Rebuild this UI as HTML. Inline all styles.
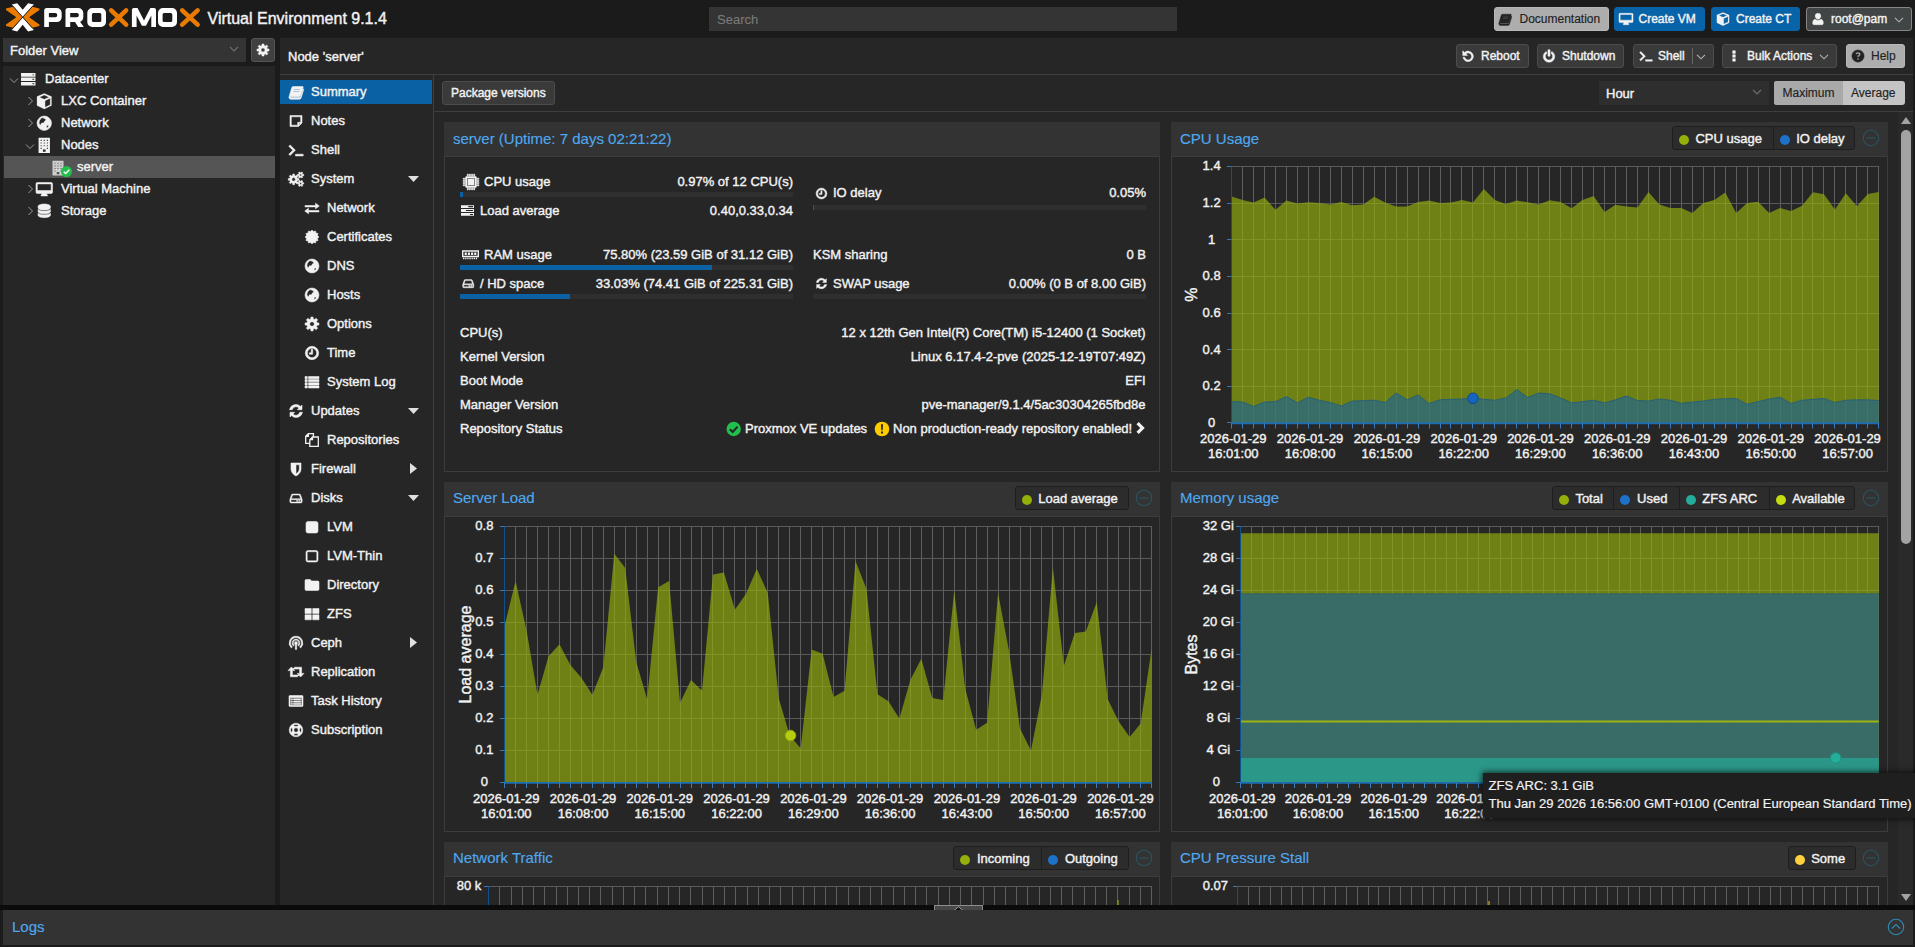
<!DOCTYPE html>
<html><head><meta charset="utf-8"><title>server - Proxmox Virtual Environment</title>
<style>
html,body{margin:0;padding:0}
body{width:1915px;height:947px;overflow:hidden;position:relative;background:#1b1b1b;color:#f2f2f2;font-family:"Liberation Sans",sans-serif;font-size:13px}
div{position:absolute;box-sizing:border-box;-webkit-text-stroke:0.4px}
svg.ch text{stroke:#f2f2f2;stroke-width:0.4px}
svg{display:block}
.btn{background:#3a3a3a;border:1px solid #4c4c4c;border-radius:3px}
.leg{background:#2c2c2c;border:1px solid #1e1e1e;border-radius:3px}
</style></head><body>

<div style="left:0;top:0;width:1915px;height:38px;background:#1b1b1b">
<svg style="position:absolute;left:0;top:0" width="205" height="38" viewBox="0 0 205 38">
<path d="M11.800 4.600L17.200 3.200 22.700 9.800 28.100 3.200 33.900 4.600 22.700 17.200ZM11.800 30.100L17.200 31.500 22.700 24.700 28.100 31.500 33.900 30.100 22.700 17.200Z" fill="#ffffff"/>
<path d="M13.200 6.700L6 8.500 6 10.100 16.300 17.200 6 24.400 6 26 13.200 27.800 22.700 17.200ZM32.200 6.700L39.400 8.500 39.400 10.100 29.100 17.200 39.400 24.400 39.400 26 32.200 27.800 22.700 17.200Z" fill="#ea7a00"/>
<path d="M12.500 5.800L32.900 28.600M32.900 5.800L12.500 28.600" stroke="#1b1b1b" stroke-width="0.900" fill="none"/>
<g fill="#fff" fill-rule="evenodd">
<path d="M44.200 27V10.500a2.500 2.500 0 0 1 2.500-2.500H56.700a5 5 0 0 1 5 5V17.100a5 5 0 0 1-5 5H48.900V27ZM48.900 12.900H55.400a1.800 1.800 0 0 1 1.800 1.800v.7a1.800 1.800 0 0 1-1.800 1.800H48.900Z"/>
<path d="M65.500 27V10.500a2.500 2.500 0 0 1 2.500-2.500H78.300a5 5 0 0 1 5 5V17.100a5 5 0 0 1-3.200 4.660L83.800 27H78.200L75 22.100H70.200V27ZM70.200 12.900H77a1.800 1.800 0 0 1 1.800 1.800v.7a1.800 1.800 0 0 1-1.800 1.800H70.200Z"/>
<path d="M92.30 8H101.00a5 5 0 0 1 5 5V22a5 5 0 0 1-5 5H92.30a5 5 0 0 1-5-5V13a5 5 0 0 1 5-5ZM93.40 12.900H99.80a1.500 1.500 0 0 1 1.500 1.500v6.200a1.500 1.500 0 0 1-1.500 1.500H93.40a1.500 1.500 0 0 1-1.500-1.500v-6.200a1.500 1.500 0 0 1 1.500-1.500Z"/>
<path d="M131.900 27V10a2 2 0 0 1 2-2H137.500L144 20.500 150.400 8H154a2 2 0 0 1 2 2V27H151.300V15.500L146 25.800H141.900L136.600 15.500V27Z"/>
<path d="M163.00 8H172.00a5 5 0 0 1 5 5V22a5 5 0 0 1-5 5H163.00a5 5 0 0 1-5-5V13a5 5 0 0 1 5-5ZM164.10 12.900H170.80a1.500 1.500 0 0 1 1.500 1.500v6.200a1.500 1.500 0 0 1-1.500 1.500H164.10a1.500 1.500 0 0 1-1.500-1.500v-6.200a1.500 1.500 0 0 1 1.500-1.500Z"/>
</g>
<g fill="none" stroke="#ea7a00" stroke-width="4.600" stroke-linecap="round">
<path d="M111.20 10.400L126.10 24.600M126.10 10.400L111.20 24.600"/><path d="M182.20 10.400L197.60 24.600M197.60 10.400L182.20 24.600"/>
</g></svg>
<div style="top:8.8px;line-height:20px;font-size:16px;white-space:pre;left:207.5px;">Virtual Environment 9.1.4</div>
<div style="left:709px;top:7px;width:468px;height:24px;background:#343434"></div>
<div style="top:10.5px;line-height:17px;font-size:13px;white-space:pre;color:#7a7a7a;left:717px;-webkit-text-stroke:0.1px;">Search</div>
<div class="btn" style="left:1494px;top:7px;width:115px;height:24px;background:#adadad;border-color:#b8b8b8;"></div>
<div style="left:1498.0px;top:12.0px;width:14px;height:14px;color:#222;line-height:0"><svg viewBox="0 0 16 16" width="14" height="14" fill="currentColor" stroke="currentColor" stroke-width="0.55" stroke-linejoin="round" style="overflow:visible;"><path d="M5.2 2.5h9.3c.5 0 .8.4.6.9l-2.6 8.3c-.2.6-.7 1-1.3 1H2.6c-.3 0-.4.3-.2.5.2.3.5.3.8.3h8.3c.5 0 1-.3 1.1-.8l2.5-8c.5.3.6.8.5 1.2l-2.5 8c-.3.9-1 1.4-1.9 1.4H3c-.9 0-1.7-.6-2-1.400-.2-.5-.1-.9.1-1.300L3.600 4c.3-.9.8-1.500 1.600-1.500zM6 5.300l-.2.700h6l.2-.700zM5.500 7l-.2.700h6l.2-.700z" fill-rule="evenodd"/></svg></div>
<div style="top:10.5px;line-height:16px;font-size:12px;white-space:pre;color:#222;left:1519.5px;-webkit-text-stroke:0.15px;">Documentation</div>
<div class="btn" style="left:1614px;top:7px;width:91px;height:24px;background:#0963a8;border-color:#0963a8;"></div>
<div style="left:1618.5px;top:12.0px;width:14px;height:14px;color:#f2f2f2;line-height:0"><svg viewBox="0 0 16 16" width="14" height="14" fill="currentColor" stroke="currentColor" stroke-width="0.55" stroke-linejoin="round" style="overflow:visible;"><path d="M1.200 1.500h13.600c.6 0 1.200.5 1.200 1.200v8.200c0 .6-.5 1.200-1.200 1.200h-4.400c0 .6.300 1.200.7 1.700v.7H4.900v-.7c.4-.5.700-1.100.7-1.700H1.200C.5 12.100 0 11.500 0 10.900V2.700c0-.6.500-1.200 1.200-1.200zM1.300 2.800v6.500h13.400V2.800z" fill-rule="evenodd"/></svg></div>
<div style="top:10.5px;line-height:16px;font-size:12px;white-space:pre;color:#f2f2f2;left:1638.5px;">Create VM</div>
<div class="btn" style="left:1711px;top:7px;width:89px;height:24px;background:#0963a8;border-color:#0963a8;"></div>
<div style="left:1715.5px;top:12.0px;width:14px;height:14px;color:#f2f2f2;line-height:0"><svg viewBox="0 0 16 16" width="14" height="14" fill="currentColor" stroke="currentColor" stroke-width="0.25" stroke-linejoin="round" style="overflow:visible;"><path d="M8 0.500l7 3v8.700L8 15.600 1 12.200V3.500zM8 2L3.400 4 8 6.100l4.600-2.100zM8.800 7.500v6.300l5-2.400V5.200z" fill-rule="evenodd"/></svg></div>
<div style="top:10.5px;line-height:16px;font-size:12px;white-space:pre;color:#f2f2f2;left:1736px;">Create CT</div>
<div class="btn" style="left:1806px;top:7px;width:106px;height:24px;background:#414545;border-color:#868686;"></div>
<div style="left:1811.0px;top:12.0px;width:14px;height:14px;color:#f2f2f2;line-height:0"><svg viewBox="0 0 16 16" width="14" height="14" fill="currentColor" stroke="currentColor" stroke-width="0.55" stroke-linejoin="round" style="overflow:visible;"><path d="M8 1.500a3.200 3.200 0 0 1 3.200 3.200c0 1.800-1.400 3.600-3.200 3.600S4.800 6.500 4.800 4.700A3.200 3.200 0 0 1 8 1.500zM4.800 8.300c.9.800 2 1.300 3.200 1.300s2.300-.5 3.200-1.300c1.700.3 2.800 1.700 2.800 3.700v1c0 .8-.7 1.500-1.500 1.500h-9C2.700 14.500 2 13.800 2 13v-1c0-2 1.100-3.400 2.800-3.700z"/></svg></div>
<div style="top:10.5px;line-height:16px;font-size:12px;white-space:pre;color:#f2f2f2;left:1831px;">root@pam</div>
<svg style="position:absolute;left:1894px;top:16.5px" width="10" height="6" viewBox="0 0 10 6"><path d="M1 0.800L5 4.800 9 0.800" fill="none" stroke="#b5b5b5" stroke-width="1.100"/></svg>
</div>
<div style="left:3px;top:38px;width:243px;height:24px;background:#343434"></div>
<div style="top:41.8px;line-height:17px;font-size:13px;white-space:pre;left:10px;">Folder View</div>
<svg style="position:absolute;left:229px;top:46px" width="10" height="7" viewBox="0 0 10 7"><path d="M1 1L5 5 9 1" fill="none" stroke="#6e6e6e" stroke-width="1.100"/></svg>
<div class="btn" style="left:251px;top:38px;width:24px;height:24px;background:#404040;border-color:#555"></div>
<div style="left:256.0px;top:43.0px;width:14px;height:14px;color:#f2f2f2;line-height:0"><svg viewBox="0 0 16 16" width="14" height="14" fill="currentColor" stroke="currentColor" stroke-width="0.55" stroke-linejoin="round" style="overflow:visible;"><path d="M14.91 6.90 L14.91 9.10 L13.04 9.26 L12.46 10.67 L13.66 12.11 L12.11 13.66 L10.67 12.46 L9.26 13.04 L9.10 14.91 L6.90 14.91 L6.74 13.04 L5.33 12.46 L3.89 13.66 L2.34 12.11 L3.54 10.67 L2.96 9.26 L1.09 9.10 L1.09 6.90 L2.96 6.74 L3.54 5.33 L2.34 3.89 L3.89 2.34 L5.33 3.54 L6.74 2.96 L6.90 1.09 L9.10 1.09 L9.26 2.96 L10.67 3.54 L12.11 2.34 L13.66 3.89 L12.46 5.33 L13.04 6.74Z M5.70 8.00 a2.30 2.30 0 1 0 4.60 0 a2.30 2.30 0 1 0 -4.60 0Z" fill-rule="evenodd"/></svg></div>
<div style="left:3px;top:66px;width:272px;height:839px;background:#262626"></div>
<svg style="position:absolute;left:9px;top:76.5px" width="10" height="7" viewBox="0 0 10 7"><path d="M1 1.500L5 5.500 9 1.500" fill="none" stroke="#9a9a9a" stroke-width="1"/></svg>
<div style="left:19.75px;top:71.35px;width:16.5px;height:16.5px;color:#f2f2f2;line-height:0"><svg viewBox="0 0 16 16" width="16.5" height="16.5" fill="currentColor" stroke="currentColor" stroke-width="0" stroke-linejoin="round" style="overflow:visible;"><path d="M1 2h14v3.500H1zM1 6.300h14v3.500H1zM1 10.600h14v3.500H1z"/><path d="M12 3.300h1.800v.9H12zM12 7.600h1.800v.9H12zM12 11.900h1.800v.9H12z" fill="#262626"/></svg></div>
<div style="top:70.0px;line-height:17px;font-size:13px;white-space:pre;left:45px;">Datacenter</div>
<svg style="position:absolute;left:26.5px;top:96px" width="7" height="10" viewBox="0 0 7 10"><path d="M1.500 1L5.500 5 1.500 9" fill="none" stroke="#9a9a9a" stroke-width="1"/></svg>
<div style="left:35.75px;top:93.35px;width:16.5px;height:16.5px;color:#f2f2f2;line-height:0"><svg viewBox="0 0 16 16" width="16.5" height="16.5" fill="currentColor" stroke="currentColor" stroke-width="0.25" stroke-linejoin="round" style="overflow:visible;"><path d="M8 0.500l7 3v8.700L8 15.600 1 12.200V3.500zM8 2L3.400 4 8 6.100l4.600-2.100zM8.800 7.500v6.300l5-2.400V5.200z" fill-rule="evenodd"/></svg></div>
<div style="top:92.0px;line-height:17px;font-size:13px;white-space:pre;left:61px;">LXC Container</div>
<svg style="position:absolute;left:26.5px;top:118px" width="7" height="10" viewBox="0 0 7 10"><path d="M1.500 1L5.500 5 1.500 9" fill="none" stroke="#9a9a9a" stroke-width="1"/></svg>
<div style="left:35.75px;top:115.35px;width:16.5px;height:16.5px;color:#f2f2f2;line-height:0"><svg viewBox="0 0 16 16" width="16.5" height="16.5" fill="currentColor" stroke="currentColor" stroke-width="0.55" stroke-linejoin="round" style="overflow:visible;"><path d="M8 1a7 7 0 1 0 0 14A7 7 0 0 0 8 1zM5.400 3c.7-.5 1.600-.4 2.200.1.600.6 1.700.4 2 1.300.2.800-.7 1.200-1.200 1.600-.6.500-.3 1.400-1.100 1.700-.7.300-1.500-.1-2.100.4-.5.400.1 1.200-.5 1.500-.6.300-1.200-.4-1.500-1C2.500 6.800 3.500 4.200 5.400 3zM11 10c.5-.2 1 0 1.100.5.100.6-.3 1.200-.8 1.500-.4.300-.9.400-1.100 0-.2-.4.100-.8.100-1.200 0-.4.300-.7.700-.8z" fill-rule="evenodd"/></svg></div>
<div style="top:114.0px;line-height:17px;font-size:13px;white-space:pre;left:61px;">Network</div>
<svg style="position:absolute;left:25px;top:142.5px" width="10" height="7" viewBox="0 0 10 7"><path d="M1 1.500L5 5.500 9 1.500" fill="none" stroke="#9a9a9a" stroke-width="1"/></svg>
<div style="left:35.75px;top:137.35px;width:16.5px;height:16.5px;color:#f2f2f2;line-height:0"><svg viewBox="0 0 16 16" width="16.5" height="16.5" fill="currentColor" stroke="currentColor" stroke-width="0" stroke-linejoin="round" style="overflow:visible;"><path d="M2.500 0.800h11v14.700h-11zM4.5 2.7h1v1.100h-1zM7.5 2.7h1v1.100h-1zM10.5 2.7h1v1.100h-1zM4.5 5.3h1v1.100h-1zM7.5 5.3h1v1.100h-1zM10.5 5.3h1v1.100h-1zM4.5 7.9h1v1.100h-1zM7.5 7.9h1v1.100h-1zM10.5 7.9h1v1.100h-1zM4.5 10.5h1v1.100h-1zM10.5 10.5h1v1.100h-1zM6.700 12v2.200h2.600V12z" fill-rule="evenodd"/></svg></div>
<div style="top:136.0px;line-height:17px;font-size:13px;white-space:pre;left:61px;">Nodes</div>
<div style="left:4px;top:156px;width:271px;height:22px;background:#555555"></div>
<div style="left:50.0px;top:159.5px;width:16px;height:16px;color:#cfcfcf;line-height:0"><svg viewBox="0 0 16 16" width="16" height="16" fill="currentColor" stroke="currentColor" stroke-width="0" stroke-linejoin="round" style="overflow:visible;"><path d="M2.500 0.800h11v14.700h-11zM4.5 2.7h1v1.100h-1zM7.5 2.7h1v1.100h-1zM10.5 2.7h1v1.100h-1zM4.5 5.3h1v1.100h-1zM7.5 5.3h1v1.100h-1zM10.5 5.3h1v1.100h-1zM4.5 7.9h1v1.100h-1zM7.5 7.9h1v1.100h-1zM10.5 7.9h1v1.100h-1zM4.5 10.5h1v1.100h-1zM10.5 10.5h1v1.100h-1zM6.700 12v2.200h2.600V12z" fill-rule="evenodd"/></svg></div>
<svg style="position:absolute;left:60.5px;top:165.5px" width="11" height="11" viewBox="0 0 11 11"><circle cx="5.500" cy="5.500" r="5.500" fill="#21bf4b"/><path d="M2.700 5.700L4.700 7.600 8.300 3.800" fill="none" stroke="#fff" stroke-width="1.400"/></svg>
<div style="top:158.0px;line-height:17px;font-size:13px;white-space:pre;left:77px;">server</div>
<svg style="position:absolute;left:26.5px;top:184px" width="7" height="10" viewBox="0 0 7 10"><path d="M1.500 1L5.500 5 1.500 9" fill="none" stroke="#9a9a9a" stroke-width="1"/></svg>
<div style="left:35.75px;top:181.35px;width:16.5px;height:16.5px;color:#f2f2f2;line-height:0"><svg viewBox="0 0 16 16" width="16.5" height="16.5" fill="currentColor" stroke="currentColor" stroke-width="0.55" stroke-linejoin="round" style="overflow:visible;"><path d="M1.200 1.500h13.600c.6 0 1.200.5 1.200 1.200v8.200c0 .6-.5 1.200-1.200 1.200h-4.400c0 .6.300 1.200.7 1.700v.7H4.900v-.7c.4-.5.700-1.100.7-1.700H1.200C.5 12.100 0 11.500 0 10.900V2.700c0-.6.500-1.200 1.200-1.200zM1.300 2.800v6.500h13.400V2.800z" fill-rule="evenodd"/></svg></div>
<div style="top:180.0px;line-height:17px;font-size:13px;white-space:pre;left:61px;">Virtual Machine</div>
<svg style="position:absolute;left:26.5px;top:206px" width="7" height="10" viewBox="0 0 7 10"><path d="M1.500 1L5.500 5 1.500 9" fill="none" stroke="#9a9a9a" stroke-width="1"/></svg>
<div style="left:35.75px;top:203.35px;width:16.5px;height:16.5px;color:#f2f2f2;line-height:0"><svg viewBox="0 0 16 16" width="16.5" height="16.5" fill="currentColor" stroke="currentColor" stroke-width="0.55" stroke-linejoin="round" style="overflow:visible;"><path d="M8 1c3.300 0 6 1 6 2.300v1.200c0 1.300-2.700 2.300-6 2.300S2 5.800 2 4.500V3.300C2 2 4.700 1 8 1zM2 6.200c1 1 3.500 1.600 6 1.600s5-.6 6-1.600v2c0 1.300-2.700 2.300-6 2.300S2 9.500 2 8.200zM2 9.900c1 1 3.500 1.600 6 1.600s5-.6 6-1.600v2c0 1.300-2.700 2.300-6 2.300s-6-1-6-2.300z"/></svg></div>
<div style="top:202.0px;line-height:17px;font-size:13px;white-space:pre;left:61px;">Storage</div>
<div style="left:280px;top:38px;width:1633px;height:867px;background:#262626"></div>
<div style="top:47.8px;line-height:17px;font-size:13px;white-space:pre;left:288px;">Node 'server'</div>
<div style="left:280px;top:74px;width:1633px;height:1px;background:#3e3e3e"></div>
<div class="btn" style="left:1456px;top:44px;width:73px;height:24px;"></div>
<div style="left:1461.0px;top:49.0px;width:14px;height:14px;color:#f2f2f2;line-height:0"><svg viewBox="0 0 16 16" width="14" height="14" fill="currentColor" stroke="currentColor" stroke-width="0.55" stroke-linejoin="round" style="overflow:visible;"><path d="M2 2l2 2a6 6 0 1 1-1.800 5.500h2A4 4 0 1 0 5.500 5.500l2 2H2z"/></svg></div>
<div style="top:47.5px;line-height:16px;font-size:12px;white-space:pre;color:#f2f2f2;left:1481px;">Reboot</div>
<div class="btn" style="left:1537px;top:44px;width:87px;height:24px;"></div>
<div style="left:1542.0px;top:49.0px;width:14px;height:14px;color:#f2f2f2;line-height:0"><svg viewBox="0 0 16 16" width="14" height="14" fill="currentColor" stroke="currentColor" stroke-width="0.55" stroke-linejoin="round" style="overflow:visible;"><path d="M6.800 0.800h2.400v7.400H6.800zM4.800 2.800l1 2a4.200 4.200 0 1 0 4.400 0l1-2a6.600 6.600 0 1 1-6.400 0z"/></svg></div>
<div style="top:47.5px;line-height:16px;font-size:12px;white-space:pre;color:#f2f2f2;left:1562px;">Shutdown</div>
<div class="btn" style="left:1633px;top:44px;width:81px;height:24px;"></div>
<div style="left:1639.0px;top:49.0px;width:14px;height:14px;color:#f2f2f2;line-height:0"><svg viewBox="0 0 16 16" width="14" height="14" fill="currentColor" stroke="currentColor" stroke-width="0.55" stroke-linejoin="round" style="overflow:visible;"><path d="M0.800 4.200l1.300-1.300L7.400 8.200 2.100 13.500.800 12.200 4.800 8.200zM7.500 12.200h7.700v1.700H7.500z"/></svg></div>
<div style="top:47.5px;line-height:16px;font-size:12px;white-space:pre;color:#f2f2f2;left:1658px;">Shell</div>
<svg style="position:absolute;left:1696px;top:53.5px" width="10" height="6" viewBox="0 0 10 6"><path d="M1 0.800L5 4.800 9 0.800" fill="none" stroke="#b5b5b5" stroke-width="1.100"/></svg>
<div style="left:1692px;top:48px;width:1px;height:16px;background:#666"></div>
<div class="btn" style="left:1722px;top:44px;width:115px;height:24px;"></div>
<div style="left:1727.0px;top:49.0px;width:14px;height:14px;color:#f2f2f2;line-height:0"><svg viewBox="0 0 16 16" width="14" height="14" fill="currentColor" stroke="currentColor" stroke-width="0.55" stroke-linejoin="round" style="overflow:visible;"><path d="M6.500 2h3v3h-3zM6.500 6.500h3v3h-3zM6.500 11h3v3h-3z"/></svg></div>
<div style="top:47.5px;line-height:16px;font-size:12px;white-space:pre;color:#f2f2f2;left:1747px;">Bulk Actions</div>
<svg style="position:absolute;left:1819px;top:53.5px" width="10" height="6" viewBox="0 0 10 6"><path d="M1 0.800L5 4.800 9 0.800" fill="none" stroke="#b5b5b5" stroke-width="1.100"/></svg>
<div class="btn" style="left:1846px;top:44px;width:59px;height:24px;background:#adadad;border-color:#b8b8b8;"></div>
<div style="left:1851.0px;top:49.0px;width:14px;height:14px;color:#222;line-height:0"><svg viewBox="0 0 16 16" width="14" height="14" fill="currentColor" stroke="currentColor" stroke-width="0.55" stroke-linejoin="round" style="overflow:visible;"><path d="M8 1a7 7 0 1 0 0 14A7 7 0 0 0 8 1zM8 3.500c1.700 0 3 1 3 2.500 0 1.200-.7 1.800-1.400 2.200-.5.300-.6.500-.6 1v.3H7v-.5c0-1 .4-1.500 1.100-1.900.5-.3.800-.5.800-1 0-.5-.4-.8-1-.8s-1.100.3-1.500.9L5 5.200c.6-1 1.700-1.700 3-1.700zM7 10.500h2v2H7z" fill-rule="evenodd"/></svg></div>
<div style="top:47.5px;line-height:16px;font-size:12px;white-space:pre;color:#222;left:1871px;-webkit-text-stroke:0.15px;">Help</div>
<div style="left:433px;top:75px;width:1px;height:830px;background:#3e3e3e"></div>
<div style="left:280px;top:80px;width:152px;height:24px;background:#0a62a5"></div>
<div style="left:288.0px;top:83.5px;width:16px;height:16px;color:#f2f2f2;line-height:0"><svg viewBox="0 0 16 16" width="16" height="16" fill="currentColor" stroke="currentColor" stroke-width="0.55" stroke-linejoin="round" style="overflow:visible;"><path d="M5.2 2.5h9.3c.5 0 .8.4.6.9l-2.6 8.3c-.2.6-.7 1-1.3 1H2.6c-.3 0-.4.3-.2.5.2.3.5.3.8.3h8.3c.5 0 1-.3 1.1-.8l2.5-8c.5.3.6.8.5 1.2l-2.5 8c-.3.9-1 1.4-1.9 1.4H3c-.9 0-1.7-.6-2-1.400-.2-.5-.1-.9.1-1.300L3.600 4c.3-.9.8-1.500 1.600-1.500zM6 5.300l-.2.700h6l.2-.700zM5.500 7l-.2.700h6l.2-.700z" fill-rule="evenodd"/></svg></div>
<div style="top:82.5px;line-height:17px;font-size:13px;white-space:pre;left:311px;">Summary</div>
<div style="left:288.0px;top:112.5px;width:16px;height:16px;color:#f2f2f2;line-height:0"><svg viewBox="0 0 16 16" width="16" height="16" fill="currentColor" stroke="currentColor" stroke-width="0.55" stroke-linejoin="round" style="overflow:visible;"><path d="M2 2.500h12v7.500l-3.500 3.500H2zM3.300 3.800v8.400h6.400V9.300h3V3.800zM11 10.600v1.300l1.300-1.300z" fill-rule="evenodd"/></svg></div>
<div style="top:111.5px;line-height:17px;font-size:13px;white-space:pre;left:311px;">Notes</div>
<div style="left:288.0px;top:141.5px;width:16px;height:16px;color:#f2f2f2;line-height:0"><svg viewBox="0 0 16 16" width="16" height="16" fill="currentColor" stroke="currentColor" stroke-width="0.55" stroke-linejoin="round" style="overflow:visible;"><path d="M0.800 4.200l1.300-1.300L7.400 8.200 2.100 13.500.800 12.200 4.800 8.200zM7.500 12.200h7.700v1.700H7.500z"/></svg></div>
<div style="top:140.5px;line-height:17px;font-size:13px;white-space:pre;left:311px;">Shell</div>
<div style="left:288.0px;top:170.5px;width:16px;height:16px;color:#f2f2f2;line-height:0"><svg viewBox="0 0 16 16" width="16" height="16" fill="currentColor" stroke="currentColor" stroke-width="0.55" stroke-linejoin="round" style="overflow:visible;"><path d="M10.93 7.56 L10.93 9.24 L9.48 9.37 L9.03 10.46 L9.97 11.57 L8.77 12.77 L7.66 11.83 L6.57 12.28 L6.44 13.73 L4.76 13.73 L4.63 12.28 L3.54 11.83 L2.43 12.77 L1.23 11.57 L2.17 10.46 L1.72 9.37 L0.27 9.24 L0.27 7.56 L1.72 7.43 L2.17 6.34 L1.23 5.23 L2.43 4.03 L3.54 4.97 L4.63 4.52 L4.76 3.07 L6.44 3.07 L6.57 4.52 L7.66 4.97 L8.77 4.03 L9.97 5.23 L9.03 6.34 L9.48 7.43Z M3.80 8.40 a1.80 1.80 0 1 0 3.60 0 a1.80 1.80 0 1 0 -3.60 0Z M15.73 3.33 L15.73 4.67 L14.68 4.71 L14.25 5.45 L14.74 6.38 L13.59 7.04 L13.03 6.16 L12.17 6.16 L11.61 7.04 L10.46 6.38 L10.95 5.45 L10.52 4.71 L9.47 4.67 L9.47 3.33 L10.52 3.29 L10.95 2.55 L10.46 1.62 L11.61 0.96 L12.17 1.84 L13.03 1.84 L13.59 0.96 L14.74 1.62 L14.25 2.55 L14.68 3.29Z M11.60 4.00 a1.00 1.00 0 1 0 2.00 0 a1.00 1.00 0 1 0 -2.00 0Z M15.73 11.73 L15.73 13.07 L14.68 13.11 L14.25 13.85 L14.74 14.78 L13.59 15.44 L13.03 14.56 L12.17 14.56 L11.61 15.44 L10.46 14.78 L10.95 13.85 L10.52 13.11 L9.47 13.07 L9.47 11.73 L10.52 11.69 L10.95 10.95 L10.46 10.02 L11.61 9.36 L12.17 10.24 L13.03 10.24 L13.59 9.36 L14.74 10.02 L14.25 10.95 L14.68 11.69Z M11.60 12.40 a1.00 1.00 0 1 0 2.00 0 a1.00 1.00 0 1 0 -2.00 0Z" fill-rule="evenodd"/></svg></div>
<div style="top:169.5px;line-height:17px;font-size:13px;white-space:pre;left:311px;">System</div>
<svg style="position:absolute;left:408px;top:175.5px" width="11" height="6" viewBox="0 0 11 6"><path d="M0 0h11L5.500 6z" fill="#e0e0e0"/></svg>
<div style="left:304.0px;top:199.5px;width:16px;height:16px;color:#f2f2f2;line-height:0"><svg viewBox="0 0 16 16" width="16" height="16" fill="currentColor" stroke="currentColor" stroke-width="0.55" stroke-linejoin="round" style="overflow:visible;"><path d="M1 5.500h10.500V3.200L15.300 6l-3.800 2.800V6.900H1zM15 10.500H4.500V8.200L.7 11l3.800 2.800v-1.900H15z"/></svg></div>
<div style="top:198.5px;line-height:17px;font-size:13px;white-space:pre;left:327px;">Network</div>
<div style="left:304.0px;top:228.5px;width:16px;height:16px;color:#f2f2f2;line-height:0"><svg viewBox="0 0 16 16" width="16" height="16" fill="currentColor" stroke="currentColor" stroke-width="0.55" stroke-linejoin="round" style="overflow:visible;"><path d="M15.00 8.00 L13.41 9.45 L14.06 11.50 L11.96 11.96 L11.50 14.06 L9.45 13.41 L8.00 15.00 L6.55 13.41 L4.50 14.06 L4.04 11.96 L1.94 11.50 L2.59 9.45 L1.00 8.00 L2.59 6.55 L1.94 4.50 L4.04 4.04 L4.50 1.94 L6.55 2.59 L8.00 1.00 L9.45 2.59 L11.50 1.94 L11.96 4.04 L14.06 4.50 L13.41 6.55Z"/></svg></div>
<div style="top:227.5px;line-height:17px;font-size:13px;white-space:pre;left:327px;">Certificates</div>
<div style="left:304.0px;top:257.5px;width:16px;height:16px;color:#f2f2f2;line-height:0"><svg viewBox="0 0 16 16" width="16" height="16" fill="currentColor" stroke="currentColor" stroke-width="0.55" stroke-linejoin="round" style="overflow:visible;"><path d="M8 1a7 7 0 1 0 0 14A7 7 0 0 0 8 1zM5.400 3c.7-.5 1.600-.4 2.200.1.600.6 1.700.4 2 1.300.2.800-.7 1.200-1.200 1.600-.6.500-.3 1.400-1.100 1.700-.7.300-1.500-.1-2.100.4-.5.400.1 1.200-.5 1.500-.6.300-1.200-.4-1.500-1C2.500 6.800 3.500 4.200 5.400 3zM11 10c.5-.2 1 0 1.100.5.100.6-.3 1.200-.8 1.500-.4.300-.9.400-1.100 0-.2-.4.100-.8.100-1.200 0-.4.300-.7.700-.8z" fill-rule="evenodd"/></svg></div>
<div style="top:256.5px;line-height:17px;font-size:13px;white-space:pre;left:327px;">DNS</div>
<div style="left:304.0px;top:286.5px;width:16px;height:16px;color:#f2f2f2;line-height:0"><svg viewBox="0 0 16 16" width="16" height="16" fill="currentColor" stroke="currentColor" stroke-width="0.55" stroke-linejoin="round" style="overflow:visible;"><path d="M8 1a7 7 0 1 0 0 14A7 7 0 0 0 8 1zM5.400 3c.7-.5 1.600-.4 2.200.1.600.6 1.700.4 2 1.300.2.800-.7 1.200-1.200 1.600-.6.500-.3 1.400-1.100 1.700-.7.300-1.500-.1-2.100.4-.5.400.1 1.200-.5 1.500-.6.300-1.200-.4-1.500-1C2.500 6.800 3.500 4.200 5.400 3zM11 10c.5-.2 1 0 1.100.5.100.6-.3 1.200-.8 1.500-.4.300-.9.400-1.100 0-.2-.4.100-.8.100-1.200 0-.4.300-.7.700-.8z" fill-rule="evenodd"/></svg></div>
<div style="top:285.5px;line-height:17px;font-size:13px;white-space:pre;left:327px;">Hosts</div>
<div style="left:304.0px;top:315.5px;width:16px;height:16px;color:#f2f2f2;line-height:0"><svg viewBox="0 0 16 16" width="16" height="16" fill="currentColor" stroke="currentColor" stroke-width="0.55" stroke-linejoin="round" style="overflow:visible;"><path d="M14.91 6.90 L14.91 9.10 L13.04 9.26 L12.46 10.67 L13.66 12.11 L12.11 13.66 L10.67 12.46 L9.26 13.04 L9.10 14.91 L6.90 14.91 L6.74 13.04 L5.33 12.46 L3.89 13.66 L2.34 12.11 L3.54 10.67 L2.96 9.26 L1.09 9.10 L1.09 6.90 L2.96 6.74 L3.54 5.33 L2.34 3.89 L3.89 2.34 L5.33 3.54 L6.74 2.96 L6.90 1.09 L9.10 1.09 L9.26 2.96 L10.67 3.54 L12.11 2.34 L13.66 3.89 L12.46 5.33 L13.04 6.74Z M5.70 8.00 a2.30 2.30 0 1 0 4.60 0 a2.30 2.30 0 1 0 -4.60 0Z" fill-rule="evenodd"/></svg></div>
<div style="top:314.5px;line-height:17px;font-size:13px;white-space:pre;left:327px;">Options</div>
<div style="left:304.0px;top:344.5px;width:16px;height:16px;color:#f2f2f2;line-height:0"><svg viewBox="0 0 16 16" width="16" height="16" fill="currentColor" stroke="currentColor" stroke-width="0.55" stroke-linejoin="round" style="overflow:visible;"><path d="M8 1.300a6.700 6.700 0 1 0 0 13.400A6.700 6.700 0 0 0 8 1.300zm0 2a4.700 4.700 0 1 1 0 9.400 4.700 4.700 0 0 1 0-9.400zM7.200 4.500h1.500v3.300h-.1v1.400H5.300V7.800h1.900z" fill-rule="evenodd"/></svg></div>
<div style="top:343.5px;line-height:17px;font-size:13px;white-space:pre;left:327px;">Time</div>
<div style="left:304.0px;top:373.5px;width:16px;height:16px;color:#f2f2f2;line-height:0"><svg viewBox="0 0 16 16" width="16" height="16" fill="currentColor" stroke="currentColor" stroke-width="0.55" stroke-linejoin="round" style="overflow:visible;"><path d="M1 2.500h2.300v2.200H1zM4.500 2.500H15v2.200H4.500zM1 5.600h2.300v2.200H1zM4.500 5.600H15v2.200H4.500zM1 8.700h2.300v2.200H1zM4.500 8.700H15v2.200H4.500zM1 11.800h2.300V14H1zM4.500 11.800H15V14H4.500z"/></svg></div>
<div style="top:372.5px;line-height:17px;font-size:13px;white-space:pre;left:327px;">System Log</div>
<div style="left:288.0px;top:402.5px;width:16px;height:16px;color:#f2f2f2;line-height:0"><svg viewBox="0 0 16 16" width="16" height="16" fill="currentColor" stroke="currentColor" stroke-width="0.55" stroke-linejoin="round" style="overflow:visible;"><path d="M14 2v4.700H9.300l1.700-1.700A4 4 0 0 0 4.200 6.700H1.500A6.600 6.600 0 0 1 12.600 3.400zM2 14V9.300h4.700L5 11a4 4 0 0 0 6.800-1.700h2.700A6.600 6.600 0 0 1 3.400 12.600z"/></svg></div>
<div style="top:401.5px;line-height:17px;font-size:13px;white-space:pre;left:311px;">Updates</div>
<svg style="position:absolute;left:408px;top:407.5px" width="11" height="6" viewBox="0 0 11 6"><path d="M0 0h11L5.500 6z" fill="#e0e0e0"/></svg>
<div style="left:304.0px;top:431.5px;width:16px;height:16px;color:#f2f2f2;line-height:0"><svg viewBox="0 0 16 16" width="16" height="16" fill="currentColor" stroke="currentColor" stroke-width="0.55" stroke-linejoin="round" style="overflow:visible;"><g fill="none" stroke="currentColor" stroke-width="1.300" stroke-linejoin="miter"><path d="M9.400 5V1.700H4.300L1.700 4.300V11.300H5.800M4.300 1.700V4.300H1.700"/><path d="M8.500 5H14.300V14.300H5.800V7.700zM8.500 5V7.700H5.800"/></g></svg></div>
<div style="top:430.5px;line-height:17px;font-size:13px;white-space:pre;left:327px;">Repositories</div>
<div style="left:288.0px;top:460.5px;width:16px;height:16px;color:#f2f2f2;line-height:0"><svg viewBox="0 0 16 16" width="16" height="16" fill="currentColor" stroke="currentColor" stroke-width="0.55" stroke-linejoin="round" style="overflow:visible;"><path d="M3 2h10v6c0 3.500-2.700 5.800-5 7-2.300-1.200-5-3.500-5-7zM8 3.800v9.100c1.600-1 3.300-2.600 3.300-4.900V3.800z" fill-rule="evenodd"/></svg></div>
<div style="top:459.5px;line-height:17px;font-size:13px;white-space:pre;left:311px;">Firewall</div>
<svg style="position:absolute;left:410px;top:463.0px" width="7" height="11" viewBox="0 0 7 11"><path d="M0 0v11L7 5.500z" fill="#e0e0e0"/></svg>
<div style="left:288.0px;top:489.5px;width:16px;height:16px;color:#f2f2f2;line-height:0"><svg viewBox="0 0 16 16" width="16" height="16" fill="currentColor" stroke="currentColor" stroke-width="0.55" stroke-linejoin="round" style="overflow:visible;"><g transform="translate(8 8.500) scale(.88 .82) translate(-8 -8)"><path d="M4 2.500h8c.5 0 .9.300 1.100.800l1.800 5.400c.1.200.1.500.1.700V12c0 .8-.7 1.500-1.500 1.500h-11C1.700 13.500 1 12.800 1 12V9.400c0-.2 0-.5.100-.7l1.800-5.400c.2-.5.600-.8 1.100-.8zM4.200 3.800L2.700 8.200h10.600l-1.500-4.400zM2.300 9.500v2.700h11.400V9.500zM11.800 10.200a.8.800 0 1 1 0 1.600.8.800 0 0 1 0-1.600zM9.300 10.200a.8.800 0 1 1 0 1.600.8.800 0 0 1 0-1.600z" fill-rule="evenodd"/></g></svg></div>
<div style="top:488.5px;line-height:17px;font-size:13px;white-space:pre;left:311px;">Disks</div>
<svg style="position:absolute;left:408px;top:494.5px" width="11" height="6" viewBox="0 0 11 6"><path d="M0 0h11L5.500 6z" fill="#e0e0e0"/></svg>
<div style="left:304.0px;top:518.5px;width:16px;height:16px;color:#f2f2f2;line-height:0"><svg viewBox="0 0 16 16" width="16" height="16" fill="currentColor" stroke="currentColor" stroke-width="0.55" stroke-linejoin="round" style="overflow:visible;"><rect x="2" y="2.500" width="12" height="11.500" rx="2"/></svg></div>
<div style="top:517.5px;line-height:17px;font-size:13px;white-space:pre;left:327px;">LVM</div>
<div style="left:304.0px;top:547.5px;width:16px;height:16px;color:#f2f2f2;line-height:0"><svg viewBox="0 0 16 16" width="16" height="16" fill="currentColor" stroke="currentColor" stroke-width="0.55" stroke-linejoin="round" style="overflow:visible;"><path d="M4 2.500h8a2 2 0 0 1 2 2V12a2 2 0 0 1-2 2H4a2 2 0 0 1-2-2V4.500a2 2 0 0 1 2-2zm0 1.200a.8.800 0 0 0-.8.800V12c0 .4.400.800.800.800h8c.4 0 .8-.4.800-.8V4.500a.8.800 0 0 0-.8-.8z" fill-rule="evenodd"/></svg></div>
<div style="top:546.5px;line-height:17px;font-size:13px;white-space:pre;left:327px;">LVM-Thin</div>
<div style="left:304.0px;top:576.5px;width:16px;height:16px;color:#f2f2f2;line-height:0"><svg viewBox="0 0 16 16" width="16" height="16" fill="currentColor" stroke="currentColor" stroke-width="0.55" stroke-linejoin="round" style="overflow:visible;"><path d="M2.200 2.500h3.600c.7 0 1.200.5 1.200 1.200v.3h6.800c.7 0 1.200.5 1.200 1.200v7.100c0 .7-.5 1.200-1.200 1.200H2.200c-.7 0-1.200-.5-1.200-1.200V3.700c0-.7.500-1.200 1.200-1.200z"/></svg></div>
<div style="top:575.5px;line-height:17px;font-size:13px;white-space:pre;left:327px;">Directory</div>
<div style="left:304.0px;top:605.5px;width:16px;height:16px;color:#f2f2f2;line-height:0"><svg viewBox="0 0 16 16" width="16" height="16" fill="currentColor" stroke="currentColor" stroke-width="0.55" stroke-linejoin="round" style="overflow:visible;"><path d="M1 2.500h6.300v5H1zM8.700 2.500H15v5H8.700zM1 8.800h6.300v5H1zM8.700 8.800H15v5H8.700z"/></svg></div>
<div style="top:604.5px;line-height:17px;font-size:13px;white-space:pre;left:327px;">ZFS</div>
<div style="left:288.0px;top:634.5px;width:16px;height:16px;color:#f2f2f2;line-height:0"><svg viewBox="0 0 16 16" width="16" height="16" fill="currentColor" stroke="currentColor" stroke-width="0.55" stroke-linejoin="round" style="overflow:visible;"><path d="M8 1.200a6.800 6.800 0 0 0-4.600 11.800l1-.9A5.500 5.500 0 1 1 11.600 12.100l1 .9A6.800 6.800 0 0 0 8 1.200zM8 4a4 4 0 0 0-2.600 7l1-.9a2.700 2.700 0 1 1 3.200 0l1 .9A4 4 0 0 0 8 4zM8 6.600a1.500 1.500 0 0 0-.7 2.800v5h1.400v-5A1.500 1.500 0 0 0 8 6.600z" fill-rule="evenodd"/></svg></div>
<div style="top:633.5px;line-height:17px;font-size:13px;white-space:pre;left:311px;">Ceph</div>
<svg style="position:absolute;left:410px;top:637.0px" width="7" height="11" viewBox="0 0 7 11"><path d="M0 0v11L7 5.500z" fill="#e0e0e0"/></svg>
<div style="left:288.0px;top:663.5px;width:16px;height:16px;color:#f2f2f2;line-height:0"><svg viewBox="0 0 16 16" width="16" height="16" fill="currentColor" stroke="currentColor" stroke-width="0.55" stroke-linejoin="round" style="overflow:visible;"><path d="M3.400 3L6.800 6.600H4.400V11H10.800L9.400 12.800H2.400V6.600H0ZM12.600 13L9.200 9.400H11.600V5H5.200L6.600 3.200H13.600V9.400H16Z"/></svg></div>
<div style="top:662.5px;line-height:17px;font-size:13px;white-space:pre;left:311px;">Replication</div>
<div style="left:288.0px;top:692.5px;width:16px;height:16px;color:#f2f2f2;line-height:0"><svg viewBox="0 0 16 16" width="16" height="16" fill="currentColor" stroke="currentColor" stroke-width="0.55" stroke-linejoin="round" style="overflow:visible;"><path d="M1.800 2.500h12.400c.5 0 .8.400.8.800v9.400c0 .5-.4.800-.8.800H1.800c-.5 0-.8-.4-.8-.8V3.300c0-.5.400-.8.800-.8zM2.200 4.800v7.500h11.600V4.800zM3.200 5.800h1.300V7H3.200zM5.500 5.800h7.300V7H5.500zM3.200 8h1.300v1.200H3.200zM5.500 8h7.300v1.200H5.500zM3.200 10.200h1.300v1.200H3.200zM5.500 10.200h7.300v1.200H5.500z" fill-rule="evenodd"/></svg></div>
<div style="top:691.5px;line-height:17px;font-size:13px;white-space:pre;left:311px;">Task History</div>
<div style="left:288.0px;top:721.5px;width:16px;height:16px;color:#f2f2f2;line-height:0"><svg viewBox="0 0 16 16" width="16" height="16" fill="currentColor" stroke="currentColor" stroke-width="0.55" stroke-linejoin="round" style="overflow:visible;"><path d="M8 1.200a6.800 6.800 0 1 0 0 13.600A6.800 6.800 0 0 0 8 1.200zM8 2.500c.9 0 1.700.2 2.500.6L9 4.600a3.500 3.500 0 0 0-2 0L5.500 3.100c.8-.4 1.600-.6 2.500-.6zM3.100 5.500L4.600 7a3.500 3.500 0 0 0 0 2L3.100 10.500a5.500 5.500 0 0 1 0-5zM12.900 5.500a5.500 5.500 0 0 1 0 5L11.400 9a3.500 3.500 0 0 0 0-2zM8 5.800a2.200 2.200 0 1 1 0 4.400 2.200 2.200 0 0 1 0-4.400zM7 11.400a3.500 3.500 0 0 0 2 0l1.500 1.500a5.500 5.500 0 0 1-5 0z" fill-rule="evenodd"/></svg></div>
<div style="top:720.5px;line-height:17px;font-size:13px;white-space:pre;left:311px;">Subscription</div>
<div style="left:434px;top:111px;width:1479px;height:1px;background:#3e3e3e"></div>
<div class="btn" style="left:442px;top:81px;width:113px;height:24px;"></div>
<div style="top:84.5px;line-height:16px;font-size:12px;white-space:pre;color:#f2f2f2;left:451px;">Package versions</div>
<div style="left:1599px;top:81px;width:170px;height:24px;background:#2e2e2e"></div>
<div style="top:84.8px;line-height:17px;font-size:13px;white-space:pre;left:1606px;">Hour</div>
<svg style="position:absolute;left:1752px;top:89px" width="10" height="7" viewBox="0 0 10 7"><path d="M1 1L5 5 9 1" fill="none" stroke="#6e6e6e" stroke-width="1.100"/></svg>
<div style="left:1774px;top:81px;width:131px;height:24px;background:#c4c4c4;border-radius:3px"></div>
<div style="left:1774px;top:81px;width:69px;height:24px;background:#a9a9a9;border-radius:3px 0 0 3px"></div>
<div style="top:84.5px;line-height:16px;font-size:12px;white-space:pre;color:#222;left:1782.5px;-webkit-text-stroke:0.15px;">Maximum</div>
<div style="top:84.5px;line-height:16px;font-size:12px;white-space:pre;color:#222;left:1851px;-webkit-text-stroke:0.15px;">Average</div>
<div style="left:0;top:0;width:1915px;height:905px;overflow:hidden">
<div style="left:444px;top:122px;width:716px;height:35px;background:#333333"></div>
<div style="left:444px;top:156px;width:716px;height:316px;background:#262626;border:1px solid #3d3d3d"></div>
<div style="top:128.7px;line-height:19px;font-size:15px;white-space:pre;color:#4fa8ee;left:453px;-webkit-text-stroke:0.15px;">server (Uptime: 7 days 02:21:22)</div>
<div style="left:463.0px;top:174.0px;width:16px;height:16px;color:currentColor;line-height:0"><svg viewBox="0 0 16 16" width="16" height="16" fill="currentColor" stroke="currentColor" stroke-width="0.55" stroke-linejoin="round" style="overflow:visible;"><path d="M3.500 2.500h9a1 1 0 0 1 1 1v9a1 1 0 0 1-1 1h-9a1 1 0 0 1-1-1v-9a1 1 0 0 1 1-1zM4 4v8h8V4zM5 5h6v6H5z" fill-rule="evenodd"/><path d="M4.300 0h1v2h-1zM6.400 0h1v2h-1zM8.600 0h1v2h-1zM10.700 0h1v2h-1zM4.300 14h1v2h-1zM6.400 14h1v2h-1zM8.600 14h1v2h-1zM10.700 14h1v2h-1zM0 4.300h2v1H0zM0 6.400h2v1H0zM0 8.600h2v1H0zM0 10.700h2v1H0zM14 4.300h2v1h-2zM14 6.400h2v1h-2zM14 8.600h2v1h-2zM14 10.700h2v1h-2z"/></svg></div>
<div style="top:173.0px;line-height:17px;font-size:13px;white-space:pre;left:484px;">CPU usage</div>
<div style="top:173.0px;line-height:17px;font-size:13px;white-space:pre;right:1122px;text-align:right;">0.97% of 12 CPU(s)</div>
<div style="left:460px;top:192.2px;width:333px;height:5px;background:#2f2f2f"></div>
<div style="left:460px;top:192.2px;width:3.2301px;height:5px;background:#0a62a5"></div>
<div style="left:461.0px;top:203.5px;width:13px;height:13px;color:currentColor;line-height:0"><svg viewBox="0 0 16 16" width="13" height="13" fill="currentColor" stroke="currentColor" stroke-width="0" stroke-linejoin="round" style="overflow:visible;"><path d="M0 1.500h16V5H0zM0 6.300h16v3.500H0zM0 11.100h16v3.500H0z"/><path d="M9 2.600h5.800v1.300H9zM6 7.400h8.800v1.300H6zM11 12.200h3.800v1.300H11z" fill="#262626"/></svg></div>
<div style="top:201.5px;line-height:17px;font-size:13px;white-space:pre;left:480px;">Load average</div>
<div style="top:201.5px;line-height:17px;font-size:13px;white-space:pre;right:1122px;text-align:right;">0.40,0.33,0.34</div>
<div style="left:462.0px;top:246.0px;width:17px;height:17px;color:currentColor;line-height:0"><svg viewBox="0 0 16 16" width="17" height="17" fill="currentColor" stroke="currentColor" stroke-width="0" stroke-linejoin="round" style="overflow:visible;"><path d="M0 4h16v6.500H0zM1.300 5.300v3.900h13.400V5.300zM2.500 6.200h2v2.200h-2zM5.500 6.200h2v2.200h-2zM8.500 6.200h2v2.200h-2zM11.500 6.200h2v2.200h-2zM1 11h1.200v1.500H1zM3 11h1.200v1.500H3zM5 11h1.200v1.500H5zM7 11h1.200v1.500H7zM9 11h1.200v1.500H9zM11 11h1.200v1.500H11zM13 11h1.200v1.500H13z" fill-rule="evenodd"/></svg></div>
<div style="top:245.5px;line-height:17px;font-size:13px;white-space:pre;left:484px;">RAM usage</div>
<div style="top:245.5px;line-height:17px;font-size:13px;white-space:pre;right:1122px;text-align:right;">75.80% (23.59 GiB of 31.12 GiB)</div>
<div style="left:460px;top:265px;width:333px;height:5px;background:#2f2f2f"></div>
<div style="left:460px;top:265px;width:252.41400000000002px;height:5px;background:#0a62a5"></div>
<div style="left:461.05px;top:275.75px;width:14.5px;height:14.5px;color:currentColor;line-height:0"><svg viewBox="0 0 16 16" width="14.5" height="14.5" fill="currentColor" stroke="currentColor" stroke-width="0.55" stroke-linejoin="round" style="overflow:visible;"><g transform="translate(8 8.500) scale(.88 .82) translate(-8 -8)"><path d="M4 2.500h8c.5 0 .9.300 1.100.800l1.800 5.400c.1.200.1.500.1.700V12c0 .8-.7 1.500-1.500 1.500h-11C1.700 13.500 1 12.800 1 12V9.400c0-.2 0-.5.100-.7l1.800-5.400c.2-.5.600-.8 1.100-.8zM4.200 3.800L2.700 8.200h10.600l-1.500-4.400zM2.300 9.500v2.700h11.400V9.500zM11.800 10.200a.8.800 0 1 1 0 1.600.8.800 0 0 1 0-1.600zM9.300 10.200a.8.800 0 1 1 0 1.600.8.800 0 0 1 0-1.600z" fill-rule="evenodd"/></g></svg></div>
<div style="top:274.5px;line-height:17px;font-size:13px;white-space:pre;left:480px;">/ HD space</div>
<div style="top:274.5px;line-height:17px;font-size:13px;white-space:pre;right:1122px;text-align:right;">33.03% (74.41 GiB of 225.31 GiB)</div>
<div style="left:460px;top:294px;width:333px;height:5px;background:#2f2f2f"></div>
<div style="left:460px;top:294px;width:109.98989999999999px;height:5px;background:#0a62a5"></div>
<div style="left:814.5px;top:186.5px;width:13px;height:13px;color:currentColor;line-height:0"><svg viewBox="0 0 16 16" width="13" height="13" fill="currentColor" stroke="currentColor" stroke-width="0.55" stroke-linejoin="round" style="overflow:visible;"><path d="M8 1.300a6.700 6.700 0 1 0 0 13.400A6.700 6.700 0 0 0 8 1.300zm0 2a4.700 4.700 0 1 1 0 9.400 4.700 4.700 0 0 1 0-9.400zM7.200 4.500h1.500v3.300h-.1v1.400H5.300V7.800h1.900z" fill-rule="evenodd"/></svg></div>
<div style="top:184.0px;line-height:17px;font-size:13px;white-space:pre;left:833px;">IO delay</div>
<div style="top:184.0px;line-height:17px;font-size:13px;white-space:pre;right:769px;text-align:right;">0.05%</div>
<div style="left:813px;top:204.5px;width:333px;height:5px;background:#2f2f2f"></div>
<div style="left:813px;top:204.5px;width:0.7px;height:5px;background:#0a62a5"></div>
<div style="top:245.5px;line-height:17px;font-size:13px;white-space:pre;left:813px;">KSM sharing</div>
<div style="top:245.5px;line-height:17px;font-size:13px;white-space:pre;right:769px;text-align:right;">0 B</div>
<div style="left:815.0px;top:277.0px;width:13px;height:13px;color:currentColor;line-height:0"><svg viewBox="0 0 16 16" width="13" height="13" fill="currentColor" stroke="currentColor" stroke-width="0.55" stroke-linejoin="round" style="overflow:visible;"><path d="M14 2v4.700H9.300l1.700-1.700A4 4 0 0 0 4.200 6.700H1.500A6.600 6.600 0 0 1 12.600 3.400zM2 14V9.300h4.700L5 11a4 4 0 0 0 6.800-1.700h2.700A6.600 6.600 0 0 1 3.400 12.600z"/></svg></div>
<div style="top:274.5px;line-height:17px;font-size:13px;white-space:pre;left:833px;">SWAP usage</div>
<div style="top:274.5px;line-height:17px;font-size:13px;white-space:pre;right:769px;text-align:right;">0.00% (0 B of 8.00 GiB)</div>
<div style="left:813px;top:294px;width:333px;height:5px;background:#2f2f2f"></div>
<div style="top:323.5px;line-height:17px;font-size:13px;white-space:pre;left:460px;">CPU(s)</div>
<div style="top:323.5px;line-height:17px;font-size:13px;white-space:pre;right:769.5px;text-align:right;">12 x 12th Gen Intel(R) Core(TM) i5-12400 (1 Socket)</div>
<div style="top:347.5px;line-height:17px;font-size:13px;white-space:pre;left:460px;">Kernel Version</div>
<div style="top:347.5px;line-height:17px;font-size:13px;white-space:pre;right:769.5px;text-align:right;">Linux 6.17.4-2-pve (2025-12-19T07:49Z)</div>
<div style="top:371.5px;line-height:17px;font-size:13px;white-space:pre;left:460px;">Boot Mode</div>
<div style="top:371.5px;line-height:17px;font-size:13px;white-space:pre;right:769.5px;text-align:right;">EFI</div>
<div style="top:395.5px;line-height:17px;font-size:13px;white-space:pre;left:460px;">Manager Version</div>
<div style="top:395.5px;line-height:17px;font-size:13px;white-space:pre;right:769.5px;text-align:right;">pve-manager/9.1.4/5ac30304265fbd8e</div>
<div style="top:419.5px;line-height:17px;font-size:13px;white-space:pre;left:460px;">Repository Status</div>
<svg style="position:absolute;left:726px;top:420.500px" width="16" height="16" viewBox="0 0 16 16"><circle cx="7.700" cy="8" r="7.200" fill="#21bf4b"/><path d="M3.900 8.200L6.700 10.900 11.600 5.600" fill="none" stroke="#262626" stroke-width="2.100"/></svg>
<div style="top:419.5px;line-height:17px;font-size:13px;white-space:pre;left:745px;">Proxmox VE updates</div>
<svg style="position:absolute;left:873.500px;top:420.500px" width="16" height="16" viewBox="0 0 16 16"><circle cx="8" cy="8" r="7.300" fill="#fc0"/><path d="M7 3.200h2l-.3 6H7.300zM7 10.500h2v2H7z" fill="#262626"/></svg>
<div style="top:419.5px;line-height:17px;font-size:13px;white-space:pre;left:893px;">Non production-ready repository enabled!</div>
<div style="left:1134.0px;top:422.0px;width:12px;height:12px;color:currentColor;line-height:0"><svg viewBox="0 0 16 16" width="12" height="12" fill="currentColor" stroke="currentColor" stroke-width="0" stroke-linejoin="round" style="overflow:visible;"><path d="M3.300 3L6.300 0l8 8-8 8-3-3L8.300 8z"/></svg></div>
<div style="left:1171px;top:122px;width:717px;height:35px;background:#333333"></div>
<div style="left:1171px;top:156px;width:717px;height:316px;background:#262626;border:1px solid #3d3d3d"></div>
<div style="top:128.7px;line-height:19px;font-size:15px;white-space:pre;color:#4fa8ee;left:1180px;-webkit-text-stroke:0.15px;">CPU Usage</div>
<div class="leg" style="left:1671.7px;top:126px;width:183.8px;height:24px;"></div>
<div style="left:1678.7px;top:135.3px;width:10px;height:10px;border-radius:5px;background:#94ae0a"></div>
<div style="top:129.6px;line-height:17px;font-size:13px;white-space:pre;left:1695.4px;">CPU usage</div>
<div style="left:1772.5px;top:127px;width:1px;height:22px;background:#1e1e1e"></div>
<div style="left:1779.5px;top:135.3px;width:10px;height:10px;border-radius:5px;background:#1c72c8"></div>
<div style="top:129.6px;line-height:17px;font-size:13px;white-space:pre;left:1796.2px;">IO delay</div>
<svg style="position:absolute;left:1862px;top:129px" width="18" height="18" viewBox="0 0 18 18"><circle cx="9" cy="9" r="7.700" fill="none" stroke="#2b545d" stroke-width="1.100"/><path d="M4.500 9h9" stroke="#2b545d" stroke-width="1.100"/></svg>
<svg class="ch" style="position:absolute;left:0;top:0" width="1915" height="905" viewBox="0 0 1915 905" font-family="Liberation Sans, sans-serif" font-size="13" fill="#f2f2f2"><path d="M1242.50 166.5V423.0M1253.50 166.5V423.0M1264.50 166.5V423.0M1275.50 166.5V423.0M1286.50 166.5V423.0M1297.50 166.5V423.0M1308.50 166.5V423.0M1319.50 166.5V423.0M1330.50 166.5V423.0M1341.50 166.5V423.0M1352.50 166.5V423.0M1363.50 166.5V423.0M1374.50 166.5V423.0M1385.50 166.5V423.0M1396.50 166.5V423.0M1407.50 166.5V423.0M1418.50 166.5V423.0M1429.50 166.5V423.0M1440.50 166.5V423.0M1450.50 166.5V423.0M1461.50 166.5V423.0M1472.50 166.5V423.0M1483.50 166.5V423.0M1494.50 166.5V423.0M1505.50 166.5V423.0M1516.50 166.5V423.0M1527.50 166.5V423.0M1538.50 166.5V423.0M1549.50 166.5V423.0M1560.50 166.5V423.0M1571.50 166.5V423.0M1582.50 166.5V423.0M1593.50 166.5V423.0M1604.50 166.5V423.0M1615.50 166.5V423.0M1626.50 166.5V423.0M1637.50 166.5V423.0M1648.50 166.5V423.0M1659.50 166.5V423.0M1670.50 166.5V423.0M1681.50 166.5V423.0M1692.50 166.5V423.0M1703.50 166.5V423.0M1714.50 166.5V423.0M1725.50 166.5V423.0M1736.50 166.5V423.0M1747.50 166.5V423.0M1758.50 166.5V423.0M1769.50 166.5V423.0M1780.50 166.5V423.0M1791.50 166.5V423.0M1802.50 166.5V423.0M1812.50 166.5V423.0M1823.50 166.5V423.0M1834.50 166.5V423.0M1845.50 166.5V423.0M1856.50 166.5V423.0M1867.50 166.5V423.0M1878.50 166.5V423.0" stroke="#5e5e5e" stroke-width="1" fill="none"/><path d="M1231.6 386.50H1879.3M1231.6 349.50H1879.3M1231.6 313.50H1879.3M1231.6 276.50H1879.3M1231.6 239.50H1879.3M1231.6 203.50H1879.3M1231.6 166.50H1879.3" stroke="#5a5a5a" stroke-width="1" fill="none"/><path d="M1231.60 423.00 L1231.60 196.40 L1242.57 200.00 L1253.54 202.60 L1264.51 197.60 L1275.48 209.70 L1286.45 200.50 L1297.42 203.50 L1308.39 202.30 L1319.36 203.10 L1330.33 204.40 L1341.29 202.10 L1352.26 205.30 L1363.23 204.40 L1374.20 196.80 L1385.17 202.60 L1396.14 206.50 L1407.11 206.50 L1418.08 202.00 L1429.05 200.50 L1440.02 203.00 L1450.99 202.60 L1461.96 200.00 L1472.93 202.60 L1483.90 189.00 L1494.87 200.00 L1505.84 204.00 L1516.81 200.50 L1527.78 202.30 L1538.75 204.40 L1549.72 200.30 L1560.68 202.00 L1571.65 208.30 L1582.62 200.00 L1593.59 196.00 L1604.56 212.00 L1615.53 204.70 L1626.50 206.50 L1637.47 207.60 L1648.44 192.00 L1659.41 204.40 L1670.38 208.00 L1681.35 208.00 L1692.32 213.00 L1703.29 203.00 L1714.26 200.00 L1725.23 192.50 L1736.20 213.00 L1747.17 203.00 L1758.14 201.70 L1769.11 213.00 L1780.07 208.00 L1791.04 211.00 L1802.01 205.80 L1812.98 192.30 L1823.95 194.30 L1834.92 209.40 L1845.89 193.20 L1856.86 206.20 L1867.83 194.00 L1878.80 192.00 L1878.80 423.00Z" fill="#94ae0a" fill-opacity="0.66"/><path d="M1231.60 423.00 L1231.60 401.60 L1242.57 402.00 L1253.54 406.40 L1264.51 402.00 L1275.48 401.60 L1286.45 396.60 L1297.42 402.80 L1308.39 397.20 L1319.36 400.20 L1330.33 402.50 L1341.29 406.00 L1352.26 401.00 L1363.23 400.70 L1374.20 400.20 L1385.17 402.50 L1396.14 393.00 L1407.11 399.80 L1418.08 394.90 L1429.05 403.40 L1440.02 399.80 L1450.99 399.30 L1461.96 399.00 L1472.93 398.00 L1483.90 399.30 L1494.87 400.20 L1505.84 398.00 L1516.81 389.50 L1527.78 397.50 L1538.75 393.00 L1549.72 393.80 L1560.68 398.00 L1571.65 402.80 L1582.62 401.60 L1593.59 400.20 L1604.56 402.80 L1615.53 399.80 L1626.50 396.00 L1637.47 400.50 L1648.44 401.00 L1659.41 399.00 L1670.38 400.20 L1681.35 403.20 L1692.32 402.00 L1703.29 401.00 L1714.26 399.30 L1725.23 398.80 L1736.20 398.40 L1747.17 404.30 L1758.14 401.60 L1769.11 399.00 L1780.07 397.20 L1791.04 403.40 L1802.01 400.20 L1812.98 399.30 L1823.95 398.40 L1834.92 402.50 L1845.89 400.20 L1856.86 399.80 L1867.83 399.80 L1878.80 400.50 L1878.80 423.00Z" fill="#115fa6" fill-opacity="0.58"/><path d="M1231.60 401.60 L1242.57 402.00 L1253.54 406.40 L1264.51 402.00 L1275.48 401.60 L1286.45 396.60 L1297.42 402.80 L1308.39 397.20 L1319.36 400.20 L1330.33 402.50 L1341.29 406.00 L1352.26 401.00 L1363.23 400.70 L1374.20 400.20 L1385.17 402.50 L1396.14 393.00 L1407.11 399.80 L1418.08 394.90 L1429.05 403.40 L1440.02 399.80 L1450.99 399.30 L1461.96 399.00 L1472.93 398.00 L1483.90 399.30 L1494.87 400.20 L1505.84 398.00 L1516.81 389.50 L1527.78 397.50 L1538.75 393.00 L1549.72 393.80 L1560.68 398.00 L1571.65 402.80 L1582.62 401.60 L1593.59 400.20 L1604.56 402.80 L1615.53 399.80 L1626.50 396.00 L1637.47 400.50 L1648.44 401.00 L1659.41 399.00 L1670.38 400.20 L1681.35 403.20 L1692.32 402.00 L1703.29 401.00 L1714.26 399.30 L1725.23 398.80 L1736.20 398.40 L1747.17 404.30 L1758.14 401.60 L1769.11 399.00 L1780.07 397.20 L1791.04 403.40 L1802.01 400.20 L1812.98 399.30 L1823.95 398.40 L1834.92 402.50 L1845.89 400.20 L1856.86 399.80 L1867.83 399.80 L1878.80 400.50" fill="none" stroke="#1d5c80" stroke-width="1" stroke-opacity="0.800"/><path d="M1231.5 166.0V423.5" stroke="#10508f" stroke-width="1"/><path d="M1231.0 423.4H1879.3" stroke="#1a6db4" stroke-width="1.800"/><path d="M1227.0 422.5H1231.5M1227.0 386.5H1231.5M1227.0 349.5H1231.5M1227.0 313.5H1231.5M1227.0 276.5H1231.5M1227.0 239.5H1231.5M1227.0 203.5H1231.5M1227.0 166.5H1231.5" stroke="#3b76b5" stroke-width="1"/><path d="M1231.5 423.5V428.5M1242.5 423.5V428.5M1253.5 423.5V428.5M1264.5 423.5V428.5M1275.5 423.5V428.5M1286.5 423.5V428.5M1297.5 423.5V428.5M1308.5 423.5V428.5M1319.5 423.5V428.5M1330.5 423.5V428.5M1341.5 423.5V428.5M1352.5 423.5V428.5M1363.5 423.5V428.5M1374.5 423.5V428.5M1385.5 423.5V428.5M1396.5 423.5V428.5M1407.5 423.5V428.5M1418.5 423.5V428.5M1429.5 423.5V428.5M1440.5 423.5V428.5M1450.5 423.5V428.5M1461.5 423.5V428.5M1472.5 423.5V428.5M1483.5 423.5V428.5M1494.5 423.5V428.5M1505.5 423.5V428.5M1516.5 423.5V428.5M1527.5 423.5V428.5M1538.5 423.5V428.5M1549.5 423.5V428.5M1560.5 423.5V428.5M1571.5 423.5V428.5M1582.5 423.5V428.5M1593.5 423.5V428.5M1604.5 423.5V428.5M1615.5 423.5V428.5M1626.5 423.5V428.5M1637.5 423.5V428.5M1648.5 423.5V428.5M1659.5 423.5V428.5M1670.5 423.5V428.5M1681.5 423.5V428.5M1692.5 423.5V428.5M1703.5 423.5V428.5M1714.5 423.5V428.5M1725.5 423.5V428.5M1736.5 423.5V428.5M1747.5 423.5V428.5M1758.5 423.5V428.5M1769.5 423.5V428.5M1780.5 423.5V428.5M1791.5 423.5V428.5M1802.5 423.5V428.5M1812.5 423.5V428.5M1823.5 423.5V428.5M1834.5 423.5V428.5M1845.5 423.5V428.5M1856.5 423.5V428.5M1867.5 423.5V428.5M1878.5 423.5V428.5" stroke="#3a7cbd" stroke-width="1"/><text x="1211.6" y="426.9" text-anchor="middle">0</text><text x="1211.6" y="390.3" text-anchor="middle">0.2</text><text x="1211.6" y="353.6" text-anchor="middle">0.4</text><text x="1211.6" y="317.0" text-anchor="middle">0.6</text><text x="1211.6" y="280.3" text-anchor="middle">0.8</text><text x="1211.6" y="243.7" text-anchor="middle">1</text><text x="1211.6" y="207.1" text-anchor="middle">1.2</text><text x="1211.6" y="170.4" text-anchor="middle">1.4</text><text x="1233.3" y="443.0" text-anchor="middle">2026-01-29</text><text x="1233.3" y="458.0" text-anchor="middle">16:01:00</text><text x="1310.1" y="443.0" text-anchor="middle">2026-01-29</text><text x="1310.1" y="458.0" text-anchor="middle">16:08:00</text><text x="1386.9" y="443.0" text-anchor="middle">2026-01-29</text><text x="1386.9" y="458.0" text-anchor="middle">16:15:00</text><text x="1463.7" y="443.0" text-anchor="middle">2026-01-29</text><text x="1463.7" y="458.0" text-anchor="middle">16:22:00</text><text x="1540.4" y="443.0" text-anchor="middle">2026-01-29</text><text x="1540.4" y="458.0" text-anchor="middle">16:29:00</text><text x="1617.2" y="443.0" text-anchor="middle">2026-01-29</text><text x="1617.2" y="458.0" text-anchor="middle">16:36:00</text><text x="1694.0" y="443.0" text-anchor="middle">2026-01-29</text><text x="1694.0" y="458.0" text-anchor="middle">16:43:00</text><text x="1770.8" y="443.0" text-anchor="middle">2026-01-29</text><text x="1770.8" y="458.0" text-anchor="middle">16:50:00</text><text x="1847.6" y="443.0" text-anchor="middle">2026-01-29</text><text x="1847.6" y="458.0" text-anchor="middle">16:57:00</text><text transform="translate(1196.5 294.75) rotate(-90)" text-anchor="middle" font-size="16">%</text><circle cx="1473.0" cy="398.3" r="5.300" fill="#1565c0" stroke="#0d4a8a" stroke-width="1"/></svg>
<div style="left:444px;top:482px;width:716px;height:35px;background:#333333"></div>
<div style="left:444px;top:516px;width:716px;height:316px;background:#262626;border:1px solid #3d3d3d"></div>
<div style="top:487.7px;line-height:19px;font-size:15px;white-space:pre;color:#4fa8ee;left:453px;-webkit-text-stroke:0.15px;">Server Load</div>
<div class="leg" style="left:1014.5px;top:486px;width:114px;height:24px;"></div>
<div style="left:1021.5px;top:495.3px;width:10px;height:10px;border-radius:5px;background:#94ae0a"></div>
<div style="top:489.6px;line-height:17px;font-size:13px;white-space:pre;left:1038.2px;">Load average</div>
<svg style="position:absolute;left:1135px;top:489px" width="18" height="18" viewBox="0 0 18 18"><circle cx="9" cy="9" r="7.700" fill="none" stroke="#2b545d" stroke-width="1.100"/><path d="M4.500 9h9" stroke="#2b545d" stroke-width="1.100"/></svg>
<svg class="ch" style="position:absolute;left:0;top:0" width="1915" height="905" viewBox="0 0 1915 905" font-family="Liberation Sans, sans-serif" font-size="13" fill="#f2f2f2"><path d="M515.50 526.5V782.5M526.50 526.5V782.5M537.50 526.5V782.5M548.50 526.5V782.5M559.50 526.5V782.5M570.50 526.5V782.5M581.50 526.5V782.5M592.50 526.5V782.5M603.50 526.5V782.5M614.50 526.5V782.5M625.50 526.5V782.5M636.50 526.5V782.5M647.50 526.5V782.5M658.50 526.5V782.5M669.50 526.5V782.5M680.50 526.5V782.5M691.50 526.5V782.5M701.50 526.5V782.5M712.50 526.5V782.5M723.50 526.5V782.5M734.50 526.5V782.5M745.50 526.5V782.5M756.50 526.5V782.5M767.50 526.5V782.5M778.50 526.5V782.5M789.50 526.5V782.5M800.50 526.5V782.5M811.50 526.5V782.5M822.50 526.5V782.5M833.50 526.5V782.5M844.50 526.5V782.5M855.50 526.5V782.5M866.50 526.5V782.5M877.50 526.5V782.5M888.50 526.5V782.5M899.50 526.5V782.5M910.50 526.5V782.5M921.50 526.5V782.5M932.50 526.5V782.5M943.50 526.5V782.5M954.50 526.5V782.5M965.50 526.5V782.5M976.50 526.5V782.5M987.50 526.5V782.5M998.50 526.5V782.5M1009.50 526.5V782.5M1020.50 526.5V782.5M1030.50 526.5V782.5M1041.50 526.5V782.5M1052.50 526.5V782.5M1063.50 526.5V782.5M1074.50 526.5V782.5M1085.50 526.5V782.5M1096.50 526.5V782.5M1107.50 526.5V782.5M1118.50 526.5V782.5M1129.50 526.5V782.5M1140.50 526.5V782.5M1151.50 526.5V782.5" stroke="#5e5e5e" stroke-width="1" fill="none"/><path d="M504.6 750.50H1152.1M504.6 718.50H1152.1M504.6 686.50H1152.1M504.6 654.50H1152.1M504.6 622.50H1152.1M504.6 590.50H1152.1M504.6 558.50H1152.1M504.6 526.50H1152.1" stroke="#5a5a5a" stroke-width="1" fill="none"/><path d="M504.60 782.50 L504.60 625.70 L515.57 580.90 L526.53 630.18 L537.50 694.82 L548.46 656.42 L559.43 644.26 L570.40 665.06 L581.36 677.86 L592.33 694.82 L603.29 667.30 L614.26 553.70 L625.23 568.10 L636.19 661.86 L647.16 699.30 L658.13 587.30 L669.09 580.90 L680.06 702.82 L691.02 680.10 L701.99 690.66 L712.96 574.50 L723.92 572.58 L734.89 609.38 L745.85 594.34 L756.82 568.74 L767.79 593.06 L778.75 698.34 L789.72 735.46 L800.68 748.26 L811.65 649.38 L822.62 653.86 L833.58 697.06 L844.55 690.66 L855.52 561.06 L866.48 588.90 L877.45 694.18 L888.41 701.22 L899.38 718.50 L910.35 680.10 L921.31 658.66 L932.28 698.02 L943.24 699.94 L954.21 590.50 L965.18 688.42 L976.14 729.70 L987.11 722.66 L998.07 593.06 L1009.04 651.30 L1020.01 728.42 L1030.97 750.50 L1041.94 694.18 L1052.91 567.46 L1063.87 665.70 L1074.84 633.06 L1085.80 631.46 L1096.77 602.02 L1107.74 699.30 L1118.70 721.38 L1129.67 737.06 L1140.63 723.62 L1151.60 648.74 L1151.60 782.50Z" fill="#94ae0a" fill-opacity="0.66"/><path d="M504.5 526.0V783.0" stroke="#10508f" stroke-width="1"/><path d="M504.0 782.9H1152.1" stroke="#1a6db4" stroke-width="1.800"/><path d="M500.0 782.5H504.5M500.0 750.5H504.5M500.0 718.5H504.5M500.0 686.5H504.5M500.0 654.5H504.5M500.0 622.5H504.5M500.0 590.5H504.5M500.0 558.5H504.5M500.0 526.5H504.5" stroke="#3b76b5" stroke-width="1"/><path d="M504.5 783.0V788.0M515.5 783.0V788.0M526.5 783.0V788.0M537.5 783.0V788.0M548.5 783.0V788.0M559.5 783.0V788.0M570.5 783.0V788.0M581.5 783.0V788.0M592.5 783.0V788.0M603.5 783.0V788.0M614.5 783.0V788.0M625.5 783.0V788.0M636.5 783.0V788.0M647.5 783.0V788.0M658.5 783.0V788.0M669.5 783.0V788.0M680.5 783.0V788.0M691.5 783.0V788.0M701.5 783.0V788.0M712.5 783.0V788.0M723.5 783.0V788.0M734.5 783.0V788.0M745.5 783.0V788.0M756.5 783.0V788.0M767.5 783.0V788.0M778.5 783.0V788.0M789.5 783.0V788.0M800.5 783.0V788.0M811.5 783.0V788.0M822.5 783.0V788.0M833.5 783.0V788.0M844.5 783.0V788.0M855.5 783.0V788.0M866.5 783.0V788.0M877.5 783.0V788.0M888.5 783.0V788.0M899.5 783.0V788.0M910.5 783.0V788.0M921.5 783.0V788.0M932.5 783.0V788.0M943.5 783.0V788.0M954.5 783.0V788.0M965.5 783.0V788.0M976.5 783.0V788.0M987.5 783.0V788.0M998.5 783.0V788.0M1009.5 783.0V788.0M1020.5 783.0V788.0M1030.5 783.0V788.0M1041.5 783.0V788.0M1052.5 783.0V788.0M1063.5 783.0V788.0M1074.5 783.0V788.0M1085.5 783.0V788.0M1096.5 783.0V788.0M1107.5 783.0V788.0M1118.5 783.0V788.0M1129.5 783.0V788.0M1140.5 783.0V788.0M1151.5 783.0V788.0" stroke="#3a7cbd" stroke-width="1"/><text x="484.4" y="786.4" text-anchor="middle">0</text><text x="484.4" y="754.4" text-anchor="middle">0.1</text><text x="484.4" y="722.4" text-anchor="middle">0.2</text><text x="484.4" y="690.4" text-anchor="middle">0.3</text><text x="484.4" y="658.4" text-anchor="middle">0.4</text><text x="484.4" y="626.4" text-anchor="middle">0.5</text><text x="484.4" y="594.4" text-anchor="middle">0.6</text><text x="484.4" y="562.4" text-anchor="middle">0.7</text><text x="484.4" y="530.4" text-anchor="middle">0.8</text><text x="506.3" y="802.5" text-anchor="middle">2026-01-29</text><text x="506.3" y="817.5" text-anchor="middle">16:01:00</text><text x="583.1" y="802.5" text-anchor="middle">2026-01-29</text><text x="583.1" y="817.5" text-anchor="middle">16:08:00</text><text x="659.8" y="802.5" text-anchor="middle">2026-01-29</text><text x="659.8" y="817.5" text-anchor="middle">16:15:00</text><text x="736.6" y="802.5" text-anchor="middle">2026-01-29</text><text x="736.6" y="817.5" text-anchor="middle">16:22:00</text><text x="813.4" y="802.5" text-anchor="middle">2026-01-29</text><text x="813.4" y="817.5" text-anchor="middle">16:29:00</text><text x="890.1" y="802.5" text-anchor="middle">2026-01-29</text><text x="890.1" y="817.5" text-anchor="middle">16:36:00</text><text x="966.9" y="802.5" text-anchor="middle">2026-01-29</text><text x="966.9" y="817.5" text-anchor="middle">16:43:00</text><text x="1043.6" y="802.5" text-anchor="middle">2026-01-29</text><text x="1043.6" y="817.5" text-anchor="middle">16:50:00</text><text x="1120.4" y="802.5" text-anchor="middle">2026-01-29</text><text x="1120.4" y="817.5" text-anchor="middle">16:57:00</text><text transform="translate(470.5 654.5) rotate(-90)" text-anchor="middle" font-size="16">Load average</text><circle cx="790.5" cy="735.5" r="5.300" fill="#b6cd10" stroke="#8ea60c" stroke-width="1"/></svg>
<div style="left:1171px;top:482px;width:717px;height:35px;background:#333333"></div>
<div style="left:1171px;top:516px;width:717px;height:316px;background:#262626;border:1px solid #3d3d3d"></div>
<div style="top:487.7px;line-height:19px;font-size:15px;white-space:pre;color:#4fa8ee;left:1180px;-webkit-text-stroke:0.15px;">Memory usage</div>
<div class="leg" style="left:1551.7px;top:486px;width:303.8px;height:24px;"></div>
<div style="left:1558.7px;top:495.3px;width:10px;height:10px;border-radius:5px;background:#94ae0a"></div>
<div style="top:489.6px;line-height:17px;font-size:13px;white-space:pre;left:1575.4px;">Total</div>
<div style="left:1613.4px;top:487px;width:1px;height:22px;background:#1e1e1e"></div>
<div style="left:1620.4px;top:495.3px;width:10px;height:10px;border-radius:5px;background:#1c72c8"></div>
<div style="top:489.6px;line-height:17px;font-size:13px;white-space:pre;left:1637.1000000000001px;">Used</div>
<div style="left:1678.6000000000001px;top:487px;width:1px;height:22px;background:#1e1e1e"></div>
<div style="left:1685.6000000000001px;top:495.3px;width:10px;height:10px;border-radius:5px;background:#24ad9a"></div>
<div style="top:489.6px;line-height:17px;font-size:13px;white-space:pre;left:1702.3000000000002px;">ZFS ARC</div>
<div style="left:1768.5000000000002px;top:487px;width:1px;height:22px;background:#1e1e1e"></div>
<div style="left:1775.5000000000002px;top:495.3px;width:10px;height:10px;border-radius:5px;background:#c4dc10"></div>
<div style="top:489.6px;line-height:17px;font-size:13px;white-space:pre;left:1792.2000000000003px;">Available</div>
<svg style="position:absolute;left:1862px;top:489px" width="18" height="18" viewBox="0 0 18 18"><circle cx="9" cy="9" r="7.700" fill="none" stroke="#2b545d" stroke-width="1.100"/><path d="M4.500 9h9" stroke="#2b545d" stroke-width="1.100"/></svg>
<svg class="ch" style="position:absolute;left:0;top:0" width="1915" height="905" viewBox="0 0 1915 905" font-family="Liberation Sans, sans-serif" font-size="13" fill="#f2f2f2"><path d="M1251.50 526.5V782.5M1262.50 526.5V782.5M1273.50 526.5V782.5M1283.50 526.5V782.5M1294.50 526.5V782.5M1305.50 526.5V782.5M1316.50 526.5V782.5M1327.50 526.5V782.5M1337.50 526.5V782.5M1348.50 526.5V782.5M1359.50 526.5V782.5M1370.50 526.5V782.5M1381.50 526.5V782.5M1392.50 526.5V782.5M1402.50 526.5V782.5M1413.50 526.5V782.5M1424.50 526.5V782.5M1435.50 526.5V782.5M1446.50 526.5V782.5M1456.50 526.5V782.5M1467.50 526.5V782.5M1478.50 526.5V782.5M1489.50 526.5V782.5M1500.50 526.5V782.5M1511.50 526.5V782.5M1521.50 526.5V782.5M1532.50 526.5V782.5M1543.50 526.5V782.5M1554.50 526.5V782.5M1565.50 526.5V782.5M1575.50 526.5V782.5M1586.50 526.5V782.5M1597.50 526.5V782.5M1608.50 526.5V782.5M1619.50 526.5V782.5M1630.50 526.5V782.5M1640.50 526.5V782.5M1651.50 526.5V782.5M1662.50 526.5V782.5M1673.50 526.5V782.5M1684.50 526.5V782.5M1694.50 526.5V782.5M1705.50 526.5V782.5M1716.50 526.5V782.5M1727.50 526.5V782.5M1738.50 526.5V782.5M1748.50 526.5V782.5M1759.50 526.5V782.5M1770.50 526.5V782.5M1781.50 526.5V782.5M1792.50 526.5V782.5M1803.50 526.5V782.5M1813.50 526.5V782.5M1824.50 526.5V782.5M1835.50 526.5V782.5M1846.50 526.5V782.5M1857.50 526.5V782.5M1867.50 526.5V782.5M1878.50 526.5V782.5" stroke="#5e5e5e" stroke-width="1" fill="none"/><path d="M1240.6 750.50H1879.3M1240.6 718.50H1879.3M1240.6 686.50H1879.3M1240.6 654.50H1879.3M1240.6 622.50H1879.3M1240.6 590.50H1879.3M1240.6 558.50H1879.3M1240.6 526.50H1879.3" stroke="#5a5a5a" stroke-width="1" fill="none"/><path d="M1240.60 782.50 L1240.60 533.30 L1251.42 533.30 L1262.23 533.30 L1273.05 533.30 L1283.87 533.30 L1294.68 533.30 L1305.50 533.30 L1316.32 533.30 L1327.14 533.30 L1337.95 533.30 L1348.77 533.30 L1359.59 533.30 L1370.40 533.30 L1381.22 533.30 L1392.04 533.30 L1402.85 533.30 L1413.67 533.30 L1424.49 533.30 L1435.31 533.30 L1446.12 533.30 L1456.94 533.30 L1467.76 533.30 L1478.57 533.30 L1489.39 533.30 L1500.21 533.30 L1511.02 533.30 L1521.84 533.30 L1532.66 533.30 L1543.47 533.30 L1554.29 533.30 L1565.11 533.30 L1575.93 533.30 L1586.74 533.30 L1597.56 533.30 L1608.38 533.30 L1619.19 533.30 L1630.01 533.30 L1640.83 533.30 L1651.64 533.30 L1662.46 533.30 L1673.28 533.30 L1684.09 533.30 L1694.91 533.30 L1705.73 533.30 L1716.55 533.30 L1727.36 533.30 L1738.18 533.30 L1749.00 533.30 L1759.81 533.30 L1770.63 533.30 L1781.45 533.30 L1792.26 533.30 L1803.08 533.30 L1813.90 533.30 L1824.72 533.30 L1835.53 533.30 L1846.35 533.30 L1857.17 533.30 L1867.98 533.30 L1878.80 533.30 L1878.80 782.50Z" fill="#94ae0a" fill-opacity="0.66"/><path d="M1240.60 782.50 L1240.60 593.70 L1251.42 593.70 L1262.23 593.70 L1273.05 593.70 L1283.87 593.70 L1294.68 593.70 L1305.50 593.70 L1316.32 593.70 L1327.14 593.70 L1337.95 593.70 L1348.77 593.70 L1359.59 593.70 L1370.40 593.70 L1381.22 593.70 L1392.04 593.70 L1402.85 593.70 L1413.67 593.70 L1424.49 593.70 L1435.31 593.70 L1446.12 593.70 L1456.94 593.70 L1467.76 593.70 L1478.57 593.70 L1489.39 593.70 L1500.21 593.70 L1511.02 593.70 L1521.84 593.70 L1532.66 593.70 L1543.47 593.70 L1554.29 593.70 L1565.11 593.70 L1575.93 593.70 L1586.74 593.70 L1597.56 593.70 L1608.38 593.70 L1619.19 593.70 L1630.01 593.70 L1640.83 593.70 L1651.64 593.70 L1662.46 593.70 L1673.28 593.70 L1684.09 593.70 L1694.91 593.70 L1705.73 593.70 L1716.55 593.70 L1727.36 593.70 L1738.18 593.70 L1749.00 593.70 L1759.81 593.70 L1770.63 593.70 L1781.45 593.70 L1792.26 593.70 L1803.08 593.70 L1813.90 593.70 L1824.72 593.70 L1835.53 593.70 L1846.35 593.70 L1857.17 593.70 L1867.98 593.70 L1878.80 593.70 L1878.80 782.50Z" fill="#356b6e" fill-opacity="0.93"/><path d="M1240.60 593.70 L1251.42 593.70 L1262.23 593.70 L1273.05 593.70 L1283.87 593.70 L1294.68 593.70 L1305.50 593.70 L1316.32 593.70 L1327.14 593.70 L1337.95 593.70 L1348.77 593.70 L1359.59 593.70 L1370.40 593.70 L1381.22 593.70 L1392.04 593.70 L1402.85 593.70 L1413.67 593.70 L1424.49 593.70 L1435.31 593.70 L1446.12 593.70 L1456.94 593.70 L1467.76 593.70 L1478.57 593.70 L1489.39 593.70 L1500.21 593.70 L1511.02 593.70 L1521.84 593.70 L1532.66 593.70 L1543.47 593.70 L1554.29 593.70 L1565.11 593.70 L1575.93 593.70 L1586.74 593.70 L1597.56 593.70 L1608.38 593.70 L1619.19 593.70 L1630.01 593.70 L1640.83 593.70 L1651.64 593.70 L1662.46 593.70 L1673.28 593.70 L1684.09 593.70 L1694.91 593.70 L1705.73 593.70 L1716.55 593.70 L1727.36 593.70 L1738.18 593.70 L1749.00 593.70 L1759.81 593.70 L1770.63 593.70 L1781.45 593.70 L1792.26 593.70 L1803.08 593.70 L1813.90 593.70 L1824.72 593.70 L1835.53 593.70 L1846.35 593.70 L1857.17 593.70 L1867.98 593.70 L1878.80 593.70" fill="none" stroke="#2f6360" stroke-width="1" stroke-opacity="0.800"/><path d="M1240.60 782.50 L1240.60 758.00 L1251.42 758.00 L1262.23 758.00 L1273.05 758.00 L1283.87 758.00 L1294.68 758.00 L1305.50 758.00 L1316.32 758.00 L1327.14 758.00 L1337.95 758.00 L1348.77 758.00 L1359.59 758.00 L1370.40 758.00 L1381.22 758.00 L1392.04 758.00 L1402.85 758.00 L1413.67 758.00 L1424.49 758.00 L1435.31 758.00 L1446.12 758.00 L1456.94 758.00 L1467.76 758.00 L1478.57 758.00 L1489.39 758.00 L1500.21 758.00 L1511.02 758.00 L1521.84 758.00 L1532.66 758.00 L1543.47 758.00 L1554.29 758.00 L1565.11 758.00 L1575.93 758.00 L1586.74 758.00 L1597.56 758.00 L1608.38 758.00 L1619.19 758.00 L1630.01 758.00 L1640.83 758.00 L1651.64 758.00 L1662.46 758.00 L1673.28 758.00 L1684.09 758.00 L1694.91 758.00 L1705.73 758.00 L1716.55 758.00 L1727.36 758.00 L1738.18 758.00 L1749.00 758.00 L1759.81 758.00 L1770.63 758.00 L1781.45 758.00 L1792.26 758.00 L1803.08 758.00 L1813.90 758.00 L1824.72 758.00 L1835.53 758.00 L1846.35 758.00 L1857.17 758.00 L1867.98 758.00 L1878.80 758.00 L1878.80 782.50Z" fill="#24ad9a" fill-opacity="0.66"/><path d="M1240.6 721.50H1878.8" stroke="#9db310" stroke-width="2"/><path d="M1240.5 526.0V783.0" stroke="#10508f" stroke-width="1"/><path d="M1240.0 782.9H1879.3" stroke="#1a6db4" stroke-width="1.800"/><path d="M1236.0 782.5H1240.5M1236.0 750.5H1240.5M1236.0 718.5H1240.5M1236.0 686.5H1240.5M1236.0 654.5H1240.5M1236.0 622.5H1240.5M1236.0 590.5H1240.5M1236.0 558.5H1240.5M1236.0 526.5H1240.5" stroke="#3b76b5" stroke-width="1"/><path d="M1240.5 783.0V788.0M1251.5 783.0V788.0M1262.5 783.0V788.0M1273.5 783.0V788.0M1283.5 783.0V788.0M1294.5 783.0V788.0M1305.5 783.0V788.0M1316.5 783.0V788.0M1327.5 783.0V788.0M1337.5 783.0V788.0M1348.5 783.0V788.0M1359.5 783.0V788.0M1370.5 783.0V788.0M1381.5 783.0V788.0M1392.5 783.0V788.0M1402.5 783.0V788.0M1413.5 783.0V788.0M1424.5 783.0V788.0M1435.5 783.0V788.0M1446.5 783.0V788.0M1456.5 783.0V788.0M1467.5 783.0V788.0M1478.5 783.0V788.0M1489.5 783.0V788.0M1500.5 783.0V788.0M1511.5 783.0V788.0M1521.5 783.0V788.0M1532.5 783.0V788.0M1543.5 783.0V788.0M1554.5 783.0V788.0M1565.5 783.0V788.0M1575.5 783.0V788.0M1586.5 783.0V788.0M1597.5 783.0V788.0M1608.5 783.0V788.0M1619.5 783.0V788.0M1630.5 783.0V788.0M1640.5 783.0V788.0M1651.5 783.0V788.0M1662.5 783.0V788.0M1673.5 783.0V788.0M1684.5 783.0V788.0M1694.5 783.0V788.0M1705.5 783.0V788.0M1716.5 783.0V788.0M1727.5 783.0V788.0M1738.5 783.0V788.0M1748.5 783.0V788.0M1759.5 783.0V788.0M1770.5 783.0V788.0M1781.5 783.0V788.0M1792.5 783.0V788.0M1803.5 783.0V788.0M1813.5 783.0V788.0M1824.5 783.0V788.0M1835.5 783.0V788.0M1846.5 783.0V788.0M1857.5 783.0V788.0M1867.5 783.0V788.0M1878.5 783.0V788.0" stroke="#3a7cbd" stroke-width="1"/><text x="1216.3" y="786.4" text-anchor="middle">0</text><text x="1218.3" y="754.4" text-anchor="middle">4 Gi</text><text x="1218.3" y="722.4" text-anchor="middle">8 Gi</text><text x="1218.3" y="690.4" text-anchor="middle">12 Gi</text><text x="1218.3" y="658.4" text-anchor="middle">16 Gi</text><text x="1218.3" y="626.4" text-anchor="middle">20 Gi</text><text x="1218.3" y="594.4" text-anchor="middle">24 Gi</text><text x="1218.3" y="562.4" text-anchor="middle">28 Gi</text><text x="1218.3" y="530.4" text-anchor="middle">32 Gi</text><text x="1242.3" y="802.5" text-anchor="middle">2026-01-29</text><text x="1242.3" y="817.5" text-anchor="middle">16:01:00</text><text x="1318.0" y="802.5" text-anchor="middle">2026-01-29</text><text x="1318.0" y="817.5" text-anchor="middle">16:08:00</text><text x="1393.7" y="802.5" text-anchor="middle">2026-01-29</text><text x="1393.7" y="817.5" text-anchor="middle">16:15:00</text><text x="1469.5" y="802.5" text-anchor="middle">2026-01-29</text><text x="1469.5" y="817.5" text-anchor="middle">16:22:00</text><text transform="translate(1196.5 654.5) rotate(-90)" text-anchor="middle" font-size="16">Bytes</text><circle cx="1835.7" cy="758.0" r="5.300" fill="#24ad9a" stroke="#1f9082" stroke-width="1"/></svg>
<div style="left:444px;top:842px;width:716px;height:35px;background:#333333"></div>
<div style="left:444px;top:876px;width:716px;height:316px;background:#262626;border:1px solid #3d3d3d"></div>
<div style="top:847.7px;line-height:19px;font-size:15px;white-space:pre;color:#4fa8ee;left:453px;-webkit-text-stroke:0.15px;">Network Traffic</div>
<div class="leg" style="left:953.2px;top:846px;width:175.4px;height:24px;"></div>
<div style="left:960.2px;top:855.3px;width:10px;height:10px;border-radius:5px;background:#94ae0a"></div>
<div style="top:849.6px;line-height:17px;font-size:13px;white-space:pre;left:976.9000000000001px;">Incoming</div>
<div style="left:1041.2px;top:847px;width:1px;height:22px;background:#1e1e1e"></div>
<div style="left:1048.2px;top:855.3px;width:10px;height:10px;border-radius:5px;background:#1c72c8"></div>
<div style="top:849.6px;line-height:17px;font-size:13px;white-space:pre;left:1064.9px;">Outgoing</div>
<svg style="position:absolute;left:1135px;top:849px" width="18" height="18" viewBox="0 0 18 18"><circle cx="9" cy="9" r="7.700" fill="none" stroke="#2b545d" stroke-width="1.100"/><path d="M4.500 9h9" stroke="#2b545d" stroke-width="1.100"/></svg>
<svg class="ch" style="position:absolute;left:0;top:0" width="1915" height="905" viewBox="0 0 1915 905" font-family="Liberation Sans, sans-serif" font-size="13" fill="#f2f2f2"><path d="M499.50 886.5V1142.5M511.50 886.5V1142.5M522.50 886.5V1142.5M533.50 886.5V1142.5M544.50 886.5V1142.5M556.50 886.5V1142.5M567.50 886.5V1142.5M578.50 886.5V1142.5M589.50 886.5V1142.5M600.50 886.5V1142.5M612.50 886.5V1142.5M623.50 886.5V1142.5M634.50 886.5V1142.5M645.50 886.5V1142.5M657.50 886.5V1142.5M668.50 886.5V1142.5M679.50 886.5V1142.5M690.50 886.5V1142.5M702.50 886.5V1142.5M713.50 886.5V1142.5M724.50 886.5V1142.5M735.50 886.5V1142.5M747.50 886.5V1142.5M758.50 886.5V1142.5M769.50 886.5V1142.5M780.50 886.5V1142.5M792.50 886.5V1142.5M803.50 886.5V1142.5M814.50 886.5V1142.5M825.50 886.5V1142.5M836.50 886.5V1142.5M848.50 886.5V1142.5M859.50 886.5V1142.5M870.50 886.5V1142.5M881.50 886.5V1142.5M893.50 886.5V1142.5M904.50 886.5V1142.5M915.50 886.5V1142.5M926.50 886.5V1142.5M938.50 886.5V1142.5M949.50 886.5V1142.5M960.50 886.5V1142.5M971.50 886.5V1142.5M983.50 886.5V1142.5M994.50 886.5V1142.5M1005.50 886.5V1142.5M1016.50 886.5V1142.5M1027.50 886.5V1142.5M1039.50 886.5V1142.5M1050.50 886.5V1142.5M1061.50 886.5V1142.5M1072.50 886.5V1142.5M1084.50 886.5V1142.5M1095.50 886.5V1142.5M1106.50 886.5V1142.5M1117.50 886.5V1142.5M1129.50 886.5V1142.5M1140.50 886.5V1142.5M1151.50 886.5V1142.5" stroke="#5e5e5e" stroke-width="1" fill="none"/><path d="M488.6 886.50H1152.1" stroke="#5a5a5a" stroke-width="1" fill="none"/><path d="M488.5 886.0V1143.0" stroke="#10508f" stroke-width="1"/><path d="M488.0 1142.9H1152.1" stroke="#1a6db4" stroke-width="1.800"/><path d="M484.0 886.5H488.5" stroke="#3b76b5" stroke-width="1"/><path d="M488.5 1143.0V1148.0M499.5 1143.0V1148.0M511.5 1143.0V1148.0M522.5 1143.0V1148.0M533.5 1143.0V1148.0M544.5 1143.0V1148.0M556.5 1143.0V1148.0M567.5 1143.0V1148.0M578.5 1143.0V1148.0M589.5 1143.0V1148.0M600.5 1143.0V1148.0M612.5 1143.0V1148.0M623.5 1143.0V1148.0M634.5 1143.0V1148.0M645.5 1143.0V1148.0M657.5 1143.0V1148.0M668.5 1143.0V1148.0M679.5 1143.0V1148.0M690.5 1143.0V1148.0M702.5 1143.0V1148.0M713.5 1143.0V1148.0M724.5 1143.0V1148.0M735.5 1143.0V1148.0M747.5 1143.0V1148.0M758.5 1143.0V1148.0M769.5 1143.0V1148.0M780.5 1143.0V1148.0M792.5 1143.0V1148.0M803.5 1143.0V1148.0M814.5 1143.0V1148.0M825.5 1143.0V1148.0M836.5 1143.0V1148.0M848.5 1143.0V1148.0M859.5 1143.0V1148.0M870.5 1143.0V1148.0M881.5 1143.0V1148.0M893.5 1143.0V1148.0M904.5 1143.0V1148.0M915.5 1143.0V1148.0M926.5 1143.0V1148.0M938.5 1143.0V1148.0M949.5 1143.0V1148.0M960.5 1143.0V1148.0M971.5 1143.0V1148.0M983.5 1143.0V1148.0M994.5 1143.0V1148.0M1005.5 1143.0V1148.0M1016.5 1143.0V1148.0M1027.5 1143.0V1148.0M1039.5 1143.0V1148.0M1050.5 1143.0V1148.0M1061.5 1143.0V1148.0M1072.5 1143.0V1148.0M1084.5 1143.0V1148.0M1095.5 1143.0V1148.0M1106.5 1143.0V1148.0M1117.5 1143.0V1148.0M1129.5 1143.0V1148.0M1140.5 1143.0V1148.0M1151.5 1143.0V1148.0" stroke="#3a7cbd" stroke-width="1"/><text x="469" y="890.4" text-anchor="middle">80 k</text></svg>
<div style="left:1171px;top:842px;width:717px;height:35px;background:#333333"></div>
<div style="left:1171px;top:876px;width:717px;height:316px;background:#262626;border:1px solid #3d3d3d"></div>
<div style="top:847.7px;line-height:19px;font-size:15px;white-space:pre;color:#4fa8ee;left:1180px;-webkit-text-stroke:0.15px;">CPU Pressure Stall</div>
<div class="leg" style="left:1787.5px;top:846px;width:68.5px;height:24px;"></div>
<div style="left:1794.5px;top:855.3px;width:10px;height:10px;border-radius:5px;background:#ffd13e"></div>
<div style="top:849.6px;line-height:17px;font-size:13px;white-space:pre;left:1811.2px;">Some</div>
<svg style="position:absolute;left:1862px;top:849px" width="18" height="18" viewBox="0 0 18 18"><circle cx="9" cy="9" r="7.700" fill="none" stroke="#2b545d" stroke-width="1.100"/><path d="M4.500 9h9" stroke="#2b545d" stroke-width="1.100"/></svg>
<svg class="ch" style="position:absolute;left:0;top:0" width="1915" height="905" viewBox="0 0 1915 905" font-family="Liberation Sans, sans-serif" font-size="13" fill="#f2f2f2"><path d="M1248.50 886.5V1142.5M1259.50 886.5V1142.5M1270.50 886.5V1142.5M1281.50 886.5V1142.5M1291.50 886.5V1142.5M1302.50 886.5V1142.5M1313.50 886.5V1142.5M1324.50 886.5V1142.5M1335.50 886.5V1142.5M1346.50 886.5V1142.5M1357.50 886.5V1142.5M1368.50 886.5V1142.5M1378.50 886.5V1142.5M1389.50 886.5V1142.5M1400.50 886.5V1142.5M1411.50 886.5V1142.5M1422.50 886.5V1142.5M1433.50 886.5V1142.5M1444.50 886.5V1142.5M1454.50 886.5V1142.5M1465.50 886.5V1142.5M1476.50 886.5V1142.5M1487.50 886.5V1142.5M1498.50 886.5V1142.5M1509.50 886.5V1142.5M1520.50 886.5V1142.5M1531.50 886.5V1142.5M1541.50 886.5V1142.5M1552.50 886.5V1142.5M1563.50 886.5V1142.5M1574.50 886.5V1142.5M1585.50 886.5V1142.5M1596.50 886.5V1142.5M1607.50 886.5V1142.5M1617.50 886.5V1142.5M1628.50 886.5V1142.5M1639.50 886.5V1142.5M1650.50 886.5V1142.5M1661.50 886.5V1142.5M1672.50 886.5V1142.5M1683.50 886.5V1142.5M1694.50 886.5V1142.5M1704.50 886.5V1142.5M1715.50 886.5V1142.5M1726.50 886.5V1142.5M1737.50 886.5V1142.5M1748.50 886.5V1142.5M1759.50 886.5V1142.5M1770.50 886.5V1142.5M1780.50 886.5V1142.5M1791.50 886.5V1142.5M1802.50 886.5V1142.5M1813.50 886.5V1142.5M1824.50 886.5V1142.5M1835.50 886.5V1142.5M1846.50 886.5V1142.5M1857.50 886.5V1142.5M1867.50 886.5V1142.5M1878.50 886.5V1142.5" stroke="#5e5e5e" stroke-width="1" fill="none"/><path d="M1237.6 886.50H1879.3" stroke="#5a5a5a" stroke-width="1" fill="none"/><path d="M1237.5 886.0V1143.0" stroke="#10508f" stroke-width="1"/><path d="M1237.0 1142.9H1879.3" stroke="#1a6db4" stroke-width="1.800"/><path d="M1233.0 886.5H1237.5" stroke="#3b76b5" stroke-width="1"/><path d="M1237.5 1143.0V1148.0M1248.5 1143.0V1148.0M1259.5 1143.0V1148.0M1270.5 1143.0V1148.0M1281.5 1143.0V1148.0M1291.5 1143.0V1148.0M1302.5 1143.0V1148.0M1313.5 1143.0V1148.0M1324.5 1143.0V1148.0M1335.5 1143.0V1148.0M1346.5 1143.0V1148.0M1357.5 1143.0V1148.0M1368.5 1143.0V1148.0M1378.5 1143.0V1148.0M1389.5 1143.0V1148.0M1400.5 1143.0V1148.0M1411.5 1143.0V1148.0M1422.5 1143.0V1148.0M1433.5 1143.0V1148.0M1444.5 1143.0V1148.0M1454.5 1143.0V1148.0M1465.5 1143.0V1148.0M1476.5 1143.0V1148.0M1487.5 1143.0V1148.0M1498.5 1143.0V1148.0M1509.5 1143.0V1148.0M1520.5 1143.0V1148.0M1531.5 1143.0V1148.0M1541.5 1143.0V1148.0M1552.5 1143.0V1148.0M1563.5 1143.0V1148.0M1574.5 1143.0V1148.0M1585.5 1143.0V1148.0M1596.5 1143.0V1148.0M1607.5 1143.0V1148.0M1617.5 1143.0V1148.0M1628.5 1143.0V1148.0M1639.5 1143.0V1148.0M1650.5 1143.0V1148.0M1661.5 1143.0V1148.0M1672.5 1143.0V1148.0M1683.5 1143.0V1148.0M1694.5 1143.0V1148.0M1704.5 1143.0V1148.0M1715.5 1143.0V1148.0M1726.5 1143.0V1148.0M1737.5 1143.0V1148.0M1748.5 1143.0V1148.0M1759.5 1143.0V1148.0M1770.5 1143.0V1148.0M1780.5 1143.0V1148.0M1791.5 1143.0V1148.0M1802.5 1143.0V1148.0M1813.5 1143.0V1148.0M1824.5 1143.0V1148.0M1835.5 1143.0V1148.0M1846.5 1143.0V1148.0M1857.5 1143.0V1148.0M1867.5 1143.0V1148.0M1878.5 1143.0V1148.0" stroke="#3a7cbd" stroke-width="1"/><text x="1215.4" y="890.4" text-anchor="middle">0.07</text></svg>
<div style="left:1117px;top:900px;width:1.5px;height:5px;background:#7c8f1a;opacity:.8"></div>
<div style="left:1487.5px;top:901px;width:2px;height:4px;background:#b79a30;opacity:.7"></div>
</div>
<div style="left:1898px;top:112px;width:15px;height:793px;background:#2a2a2a"></div>
<svg style="position:absolute;left:1901px;top:117px" width="10" height="7" viewBox="0 0 10 7"><path d="M0 7L5 0 10 7z" fill="#a3a3a3"/></svg>
<div style="left:1901px;top:130px;width:9.5px;height:414px;background:#a3a3a3;border-radius:5px"></div>
<svg style="position:absolute;left:1901px;top:894px" width="10" height="7" viewBox="0 0 10 7"><path d="M0 0L5 7 10 0z" fill="#a3a3a3"/></svg>
<div style="left:1483px;top:773px;width:440px;height:45px;background:#1f1f1f;box-shadow:0 0 6px 1px rgba(0,0,0,0.7)"></div>
<div style="top:777.0px;line-height:17px;font-size:13px;white-space:pre;left:1488.5px;-webkit-text-stroke:0.2px;">ZFS ARC: 3.1 GiB</div>
<div style="top:794.5px;line-height:17px;font-size:13px;white-space:pre;left:1488.5px;-webkit-text-stroke:0.2px;">Thu Jan 29 2026 16:56:00 GMT+0100 (Central European Standard Time)</div>
<div style="left:0px;top:905px;width:1915px;height:5px;background:#0b0b0b"></div>
<div style="left:934px;top:905px;width:48.5px;height:5px;background:#484848;border:1px solid #8c8c8c;border-bottom:none"></div>
<svg style="position:absolute;left:953px;top:905.500px" width="11" height="5" viewBox="0 0 11 5"><path d="M0.500 5L5.500 0.700 10.500 5" fill="#111" stroke="#aaa" stroke-width="0.900"/></svg>
<div style="left:3px;top:910px;width:1910px;height:35px;background:#333333"></div>
<div style="top:916.5px;line-height:19px;font-size:15px;white-space:pre;color:#4fa8ee;left:12px;-webkit-text-stroke:0.15px;">Logs</div>
<svg style="position:absolute;left:1887px;top:918px" width="18" height="18" viewBox="0 0 18 18"><circle cx="9" cy="9" r="7.700" fill="none" stroke="#2c8cb8" stroke-width="1.100"/><path d="M4.800 10.500L9 6.500 13.200 10.500" fill="none" stroke="#2c8cb8" stroke-width="1.100"/></svg>
</body></html>
